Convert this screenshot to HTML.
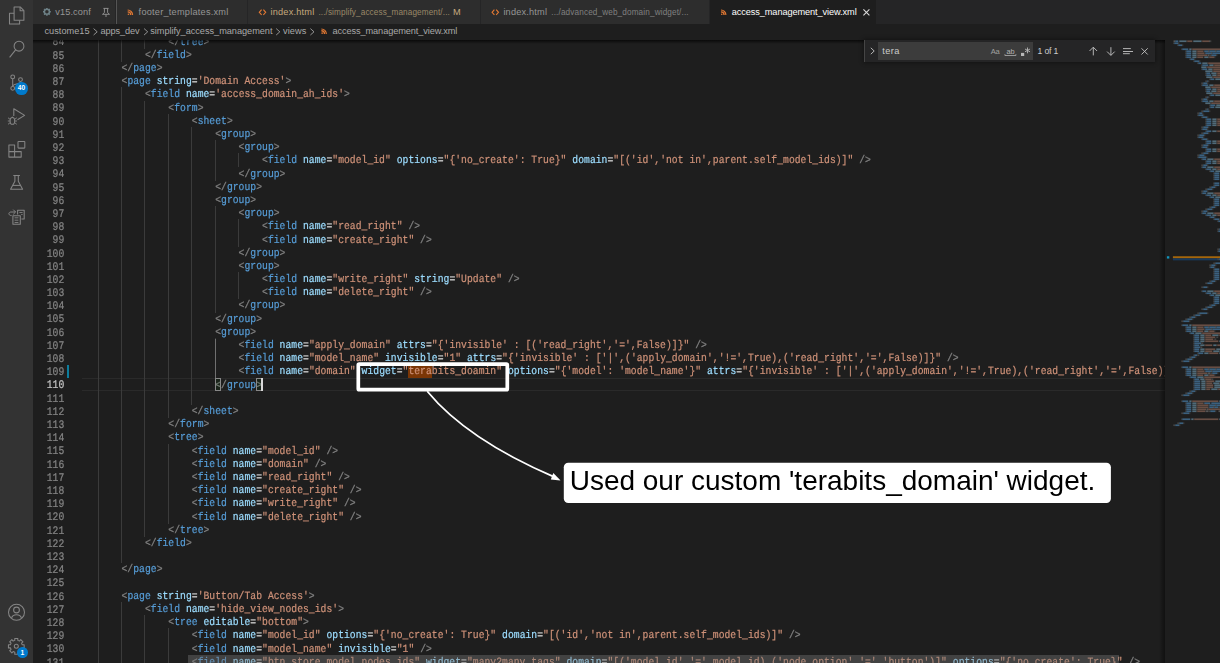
<!DOCTYPE html>
<html>
<head>
<meta charset="utf-8">
<title>access_management_view.xml</title>
<style>
html,body{margin:0;padding:0;}
body{width:1220px;height:663px;overflow:hidden;background:#1e1e1e;position:relative;font-family:"Liberation Sans",sans-serif;}
#act{position:absolute;left:0;top:0;width:33px;height:663px;background:#333333;}
#act svg{position:absolute;}
#tabs{position:absolute;left:33px;top:0;width:1187px;height:24px;background:#252526;}
.tab{position:absolute;top:0;height:24px;background:#2d2d2d;box-sizing:border-box;border-right:1px solid #252526;}
.tab.active{background:#1e1e1e;}
.tt{position:absolute;top:0;height:24px;line-height:24px;font-size:9.1px;color:#969696;white-space:nowrap;}
.tt.desc{font-size:7.9px;color:#7d7d7d;}
#bc{position:absolute;left:33px;top:24px;width:1187px;height:15.5px;background:#1e1e1e;}
.bt{position:absolute;top:0;height:15.5px;line-height:15.5px;font-size:9.1px;color:#a0a0a0;white-space:nowrap;}
#shadow{position:absolute;left:33px;top:39.5px;width:1132px;height:4px;background:linear-gradient(#000000aa,#00000000);}
#ed{position:absolute;left:33px;top:39.5px;width:1132px;height:623.5px;overflow:hidden;}
#edin{position:absolute;left:-33px;top:-39.5px;width:1220px;height:663px;}
.ln{position:absolute;left:33.5px;width:30.8px;text-align:right;height:13px;line-height:13px;font-family:"Liberation Mono",monospace;font-size:9.72px;letter-spacing:0.0211px;color:#858585;transform:scaleY(1.2);transform-origin:0 9px;text-rendering:geometricPrecision;-webkit-text-stroke:0.2px;}
.ln.cur{color:#c6c6c6;}
.cl{position:absolute;height:13px;line-height:13px;font-family:"Liberation Mono",monospace;font-size:9.72px;letter-spacing:0.0211px;color:#d4d4d4;white-space:pre;transform:scaleY(1.15);transform-origin:0 9px;text-rendering:geometricPrecision;-webkit-text-stroke:0.2px;}
.cl i{font-style:normal;}
.b{color:#808080;}
.t{color:#569cd6;}
.a{color:#9cdcfe;}
.e{color:#d4d4d4;}
.s{color:#ce9178;}
.g{position:absolute;width:1px;height:14px;background:#3b3b3b;}
.abs{position:absolute;}
.u{position:absolute;white-space:nowrap;line-height:normal;}
#find{position:absolute;left:864px;top:39.5px;width:291px;height:22.5px;background:#252526;box-sizing:border-box;border-left:1px solid #454545;box-shadow:0 0 4px 1px rgba(0,0,0,0.36);}
#finp{position:absolute;left:878px;top:42px;width:155px;height:17.7px;background:#3c3c3c;}
.ft{position:absolute;font-size:9.1px;color:#cccccc;white-space:nowrap;line-height:12px;}
#mini{position:absolute;left:1165px;top:39.5px;width:55px;height:623.5px;background:#1e1e1e;overflow:hidden;}
</style>
</head>
<body>

<!-- editor -->
<div id="ed"><div id="edin">
<!-- current line borders -->
<div class="abs" style="left:82px;top:378px;width:1083px;height:1px;background:#2a2a2a"></div>
<div class="abs" style="left:82px;top:390px;width:1083px;height:1px;background:#2a2a2a"></div>
<!-- find match -->
<div class="abs" style="left:408px;top:365px;width:24px;height:13px;background:#7b3606"></div>
<!-- modified gutter -->
<div class="abs" style="left:67.4px;top:365.2px;width:2px;height:13px;background:#0c7d9d"></div>
<div class="g" style="left:98px;top:35px"></div>
<div class="g" style="left:121px;top:35px"></div>
<div class="g" style="left:144px;top:35px"></div>
<div class="ln" style="top:36.00px">84</div>
<div class="cl" style="left:168.36px;top:36.00px"><i class="b">&lt;/</i><i class="t">tree</i><i class="b">&gt;</i></div>
<div class="g" style="left:98px;top:48px"></div>
<div class="g" style="left:121px;top:48px"></div>
<div class="ln" style="top:50.00px">85</div>
<div class="cl" style="left:144.95px;top:49.00px"><i class="b">&lt;/</i><i class="t">field</i><i class="b">&gt;</i></div>
<div class="g" style="left:98px;top:61px"></div>
<div class="ln" style="top:63.00px">86</div>
<div class="cl" style="left:121.53px;top:62.00px"><i class="b">&lt;/</i><i class="t">page</i><i class="b">&gt;</i></div>
<div class="g" style="left:98px;top:74px"></div>
<div class="ln" style="top:76.00px">87</div>
<div class="cl" style="left:121.53px;top:75.00px"><i class="b">&lt;</i><i class="t">page</i> <i class="a">string</i><i class="e">=</i><i class="s">'Domain Access'</i><i class="b">&gt;</i></div>
<div class="g" style="left:98px;top:87px"></div>
<div class="g" style="left:121px;top:87px"></div>
<div class="ln" style="top:89.00px">88</div>
<div class="cl" style="left:144.95px;top:88.00px"><i class="b">&lt;</i><i class="t">field</i> <i class="a">name</i><i class="e">=</i><i class="s">'access_domain_ah_ids'</i><i class="b">&gt;</i></div>
<div class="g" style="left:98px;top:101px"></div>
<div class="g" style="left:121px;top:101px"></div>
<div class="g" style="left:144px;top:101px"></div>
<div class="ln" style="top:102.00px">89</div>
<div class="cl" style="left:168.36px;top:102.00px"><i class="b">&lt;</i><i class="t">form</i><i class="b">&gt;</i></div>
<div class="g" style="left:98px;top:114px"></div>
<div class="g" style="left:121px;top:114px"></div>
<div class="g" style="left:144px;top:114px"></div>
<div class="g" style="left:168px;top:114px"></div>
<div class="ln" style="top:116.00px">90</div>
<div class="cl" style="left:191.78px;top:115.00px"><i class="b">&lt;</i><i class="t">sheet</i><i class="b">&gt;</i></div>
<div class="g" style="left:98px;top:127px"></div>
<div class="g" style="left:121px;top:127px"></div>
<div class="g" style="left:144px;top:127px"></div>
<div class="g" style="left:168px;top:127px"></div>
<div class="g" style="left:191px;top:127px"></div>
<div class="ln" style="top:129.00px">91</div>
<div class="cl" style="left:215.20px;top:128.00px"><i class="b">&lt;</i><i class="t">group</i><i class="b">&gt;</i></div>
<div class="g" style="left:98px;top:140px"></div>
<div class="g" style="left:121px;top:140px"></div>
<div class="g" style="left:144px;top:140px"></div>
<div class="g" style="left:168px;top:140px"></div>
<div class="g" style="left:191px;top:140px"></div>
<div class="g" style="left:215px;top:140px"></div>
<div class="ln" style="top:142.00px">92</div>
<div class="cl" style="left:238.61px;top:141.00px"><i class="b">&lt;</i><i class="t">group</i><i class="b">&gt;</i></div>
<div class="g" style="left:98px;top:153px"></div>
<div class="g" style="left:121px;top:153px"></div>
<div class="g" style="left:144px;top:153px"></div>
<div class="g" style="left:168px;top:153px"></div>
<div class="g" style="left:191px;top:153px"></div>
<div class="g" style="left:215px;top:153px"></div>
<div class="g" style="left:238px;top:153px"></div>
<div class="ln" style="top:155.00px">93</div>
<div class="cl" style="left:262.03px;top:154.00px"><i class="b">&lt;</i><i class="t">field</i> <i class="a">name</i><i class="e">=</i><i class="s">"model_id"</i> <i class="a">options</i><i class="e">=</i><i class="s">"{'no_create': True}"</i> <i class="a">domain</i><i class="e">=</i><i class="s">"[('id','not in',parent.self_model_ids)]"</i> <i class="b">/&gt;</i></div>
<div class="g" style="left:98px;top:167px"></div>
<div class="g" style="left:121px;top:167px"></div>
<div class="g" style="left:144px;top:167px"></div>
<div class="g" style="left:168px;top:167px"></div>
<div class="g" style="left:191px;top:167px"></div>
<div class="g" style="left:215px;top:167px"></div>
<div class="ln" style="top:168.00px">94</div>
<div class="cl" style="left:238.61px;top:168.00px"><i class="b">&lt;/</i><i class="t">group</i><i class="b">&gt;</i></div>
<div class="g" style="left:98px;top:180px"></div>
<div class="g" style="left:121px;top:180px"></div>
<div class="g" style="left:144px;top:180px"></div>
<div class="g" style="left:168px;top:180px"></div>
<div class="g" style="left:191px;top:180px"></div>
<div class="ln" style="top:182.00px">95</div>
<div class="cl" style="left:215.20px;top:181.00px"><i class="b">&lt;/</i><i class="t">group</i><i class="b">&gt;</i></div>
<div class="g" style="left:98px;top:193px"></div>
<div class="g" style="left:121px;top:193px"></div>
<div class="g" style="left:144px;top:193px"></div>
<div class="g" style="left:168px;top:193px"></div>
<div class="g" style="left:191px;top:193px"></div>
<div class="ln" style="top:195.00px">96</div>
<div class="cl" style="left:215.20px;top:194.00px"><i class="b">&lt;</i><i class="t">group</i><i class="b">&gt;</i></div>
<div class="g" style="left:98px;top:206px"></div>
<div class="g" style="left:121px;top:206px"></div>
<div class="g" style="left:144px;top:206px"></div>
<div class="g" style="left:168px;top:206px"></div>
<div class="g" style="left:191px;top:206px"></div>
<div class="g" style="left:215px;top:206px"></div>
<div class="ln" style="top:208.00px">97</div>
<div class="cl" style="left:238.61px;top:207.00px"><i class="b">&lt;</i><i class="t">group</i><i class="b">&gt;</i></div>
<div class="g" style="left:98px;top:219px"></div>
<div class="g" style="left:121px;top:219px"></div>
<div class="g" style="left:144px;top:219px"></div>
<div class="g" style="left:168px;top:219px"></div>
<div class="g" style="left:191px;top:219px"></div>
<div class="g" style="left:215px;top:219px"></div>
<div class="g" style="left:238px;top:219px"></div>
<div class="ln" style="top:221.00px">98</div>
<div class="cl" style="left:262.03px;top:220.00px"><i class="b">&lt;</i><i class="t">field</i> <i class="a">name</i><i class="e">=</i><i class="s">"read_right"</i> <i class="b">/&gt;</i></div>
<div class="g" style="left:98px;top:233px"></div>
<div class="g" style="left:121px;top:233px"></div>
<div class="g" style="left:144px;top:233px"></div>
<div class="g" style="left:168px;top:233px"></div>
<div class="g" style="left:191px;top:233px"></div>
<div class="g" style="left:215px;top:233px"></div>
<div class="g" style="left:238px;top:233px"></div>
<div class="ln" style="top:234.00px">99</div>
<div class="cl" style="left:262.03px;top:234.00px"><i class="b">&lt;</i><i class="t">field</i> <i class="a">name</i><i class="e">=</i><i class="s">"create_right"</i> <i class="b">/&gt;</i></div>
<div class="g" style="left:98px;top:246px"></div>
<div class="g" style="left:121px;top:246px"></div>
<div class="g" style="left:144px;top:246px"></div>
<div class="g" style="left:168px;top:246px"></div>
<div class="g" style="left:191px;top:246px"></div>
<div class="g" style="left:215px;top:246px"></div>
<div class="ln" style="top:248.00px">100</div>
<div class="cl" style="left:238.61px;top:247.00px"><i class="b">&lt;/</i><i class="t">group</i><i class="b">&gt;</i></div>
<div class="g" style="left:98px;top:259px"></div>
<div class="g" style="left:121px;top:259px"></div>
<div class="g" style="left:144px;top:259px"></div>
<div class="g" style="left:168px;top:259px"></div>
<div class="g" style="left:191px;top:259px"></div>
<div class="g" style="left:215px;top:259px"></div>
<div class="ln" style="top:261.00px">101</div>
<div class="cl" style="left:238.61px;top:260.00px"><i class="b">&lt;</i><i class="t">group</i><i class="b">&gt;</i></div>
<div class="g" style="left:98px;top:272px"></div>
<div class="g" style="left:121px;top:272px"></div>
<div class="g" style="left:144px;top:272px"></div>
<div class="g" style="left:168px;top:272px"></div>
<div class="g" style="left:191px;top:272px"></div>
<div class="g" style="left:215px;top:272px"></div>
<div class="g" style="left:238px;top:272px"></div>
<div class="ln" style="top:274.00px">102</div>
<div class="cl" style="left:262.03px;top:273.00px"><i class="b">&lt;</i><i class="t">field</i> <i class="a">name</i><i class="e">=</i><i class="s">"write_right"</i> <i class="a">string</i><i class="e">=</i><i class="s">"Update"</i> <i class="b">/&gt;</i></div>
<div class="g" style="left:98px;top:285px"></div>
<div class="g" style="left:121px;top:285px"></div>
<div class="g" style="left:144px;top:285px"></div>
<div class="g" style="left:168px;top:285px"></div>
<div class="g" style="left:191px;top:285px"></div>
<div class="g" style="left:215px;top:285px"></div>
<div class="g" style="left:238px;top:285px"></div>
<div class="ln" style="top:287.00px">103</div>
<div class="cl" style="left:262.03px;top:286.00px"><i class="b">&lt;</i><i class="t">field</i> <i class="a">name</i><i class="e">=</i><i class="s">"delete_right"</i> <i class="b">/&gt;</i></div>
<div class="g" style="left:98px;top:299px"></div>
<div class="g" style="left:121px;top:299px"></div>
<div class="g" style="left:144px;top:299px"></div>
<div class="g" style="left:168px;top:299px"></div>
<div class="g" style="left:191px;top:299px"></div>
<div class="g" style="left:215px;top:299px"></div>
<div class="ln" style="top:300.00px">104</div>
<div class="cl" style="left:238.61px;top:299.00px"><i class="b">&lt;/</i><i class="t">group</i><i class="b">&gt;</i></div>
<div class="g" style="left:98px;top:312px"></div>
<div class="g" style="left:121px;top:312px"></div>
<div class="g" style="left:144px;top:312px"></div>
<div class="g" style="left:168px;top:312px"></div>
<div class="g" style="left:191px;top:312px"></div>
<div class="ln" style="top:313.00px">105</div>
<div class="cl" style="left:215.20px;top:313.00px"><i class="b">&lt;/</i><i class="t">group</i><i class="b">&gt;</i></div>
<div class="g" style="left:98px;top:325px"></div>
<div class="g" style="left:121px;top:325px"></div>
<div class="g" style="left:144px;top:325px"></div>
<div class="g" style="left:168px;top:325px"></div>
<div class="g" style="left:191px;top:325px"></div>
<div class="ln" style="top:327.00px">106</div>
<div class="cl" style="left:215.20px;top:326.00px"><i class="b">&lt;</i><i class="t">group</i><i class="b">&gt;</i></div>
<div class="g" style="left:98px;top:338px"></div>
<div class="g" style="left:121px;top:338px"></div>
<div class="g" style="left:144px;top:338px"></div>
<div class="g" style="left:168px;top:338px"></div>
<div class="g" style="left:191px;top:338px"></div>
<div class="g" style="left:215px;top:338px"></div>
<div class="ln" style="top:340.00px">107</div>
<div class="cl" style="left:238.61px;top:339.00px"><i class="b">&lt;</i><i class="t">field</i> <i class="a">name</i><i class="e">=</i><i class="s">"apply_domain"</i> <i class="a">attrs</i><i class="e">=</i><i class="s">"{'invisible' : [('read_right','=',False)]}"</i> <i class="b">/&gt;</i></div>
<div class="g" style="left:98px;top:351px"></div>
<div class="g" style="left:121px;top:351px"></div>
<div class="g" style="left:144px;top:351px"></div>
<div class="g" style="left:168px;top:351px"></div>
<div class="g" style="left:191px;top:351px"></div>
<div class="g" style="left:215px;top:351px"></div>
<div class="ln" style="top:353.00px">108</div>
<div class="cl" style="left:238.61px;top:352.00px"><i class="b">&lt;</i><i class="t">field</i> <i class="a">name</i><i class="e">=</i><i class="s">"model_name"</i> <i class="a">invisible</i><i class="e">=</i><i class="s">"1"</i> <i class="a">attrs</i><i class="e">=</i><i class="s">"{'invisible' : ['|',('apply_domain','!=',True),('read_right','=',False)]}"</i> <i class="b">/&gt;</i></div>
<div class="g" style="left:98px;top:365px"></div>
<div class="g" style="left:121px;top:365px"></div>
<div class="g" style="left:144px;top:365px"></div>
<div class="g" style="left:168px;top:365px"></div>
<div class="g" style="left:191px;top:365px"></div>
<div class="g" style="left:215px;top:365px"></div>
<div class="ln" style="top:366.00px">109</div>
<div class="cl" style="left:238.61px;top:365.00px"><i class="b">&lt;</i><i class="t">field</i> <i class="a">name</i><i class="e">=</i><i class="s">"domain"</i> <i class="a">widget</i><i class="e">=</i><i class="s">"terabits_doamin"</i> <i class="a">options</i><i class="e">=</i><i class="s">"{'model': 'model_name'}"</i> <i class="a">attrs</i><i class="e">=</i><i class="s">"{'invisible' : ['|',('apply_domain','!=',True),('read_right','=',False)]}"</i> <i class="b">/&gt;</i></div>
<div class="g" style="left:98px;top:378px"></div>
<div class="g" style="left:121px;top:378px"></div>
<div class="g" style="left:144px;top:378px"></div>
<div class="g" style="left:168px;top:378px"></div>
<div class="g" style="left:191px;top:378px"></div>
<div class="ln cur" style="top:379.00px">110</div>
<div class="cl" style="left:215.20px;top:379.00px"><i class="b">&lt;/</i><i class="t">group</i><i class="b">&gt;</i></div>
<div class="g" style="left:98px;top:391px"></div>
<div class="g" style="left:121px;top:391px"></div>
<div class="g" style="left:144px;top:391px"></div>
<div class="g" style="left:168px;top:391px"></div>
<div class="g" style="left:191px;top:391px"></div>
<div class="ln" style="top:393.00px">111</div>
<div class="g" style="left:98px;top:404px"></div>
<div class="g" style="left:121px;top:404px"></div>
<div class="g" style="left:144px;top:404px"></div>
<div class="g" style="left:168px;top:404px"></div>
<div class="ln" style="top:406.00px">112</div>
<div class="cl" style="left:191.78px;top:405.00px"><i class="b">&lt;/</i><i class="t">sheet</i><i class="b">&gt;</i></div>
<div class="g" style="left:98px;top:417px"></div>
<div class="g" style="left:121px;top:417px"></div>
<div class="g" style="left:144px;top:417px"></div>
<div class="ln" style="top:419.00px">113</div>
<div class="cl" style="left:168.36px;top:418.00px"><i class="b">&lt;/</i><i class="t">form</i><i class="b">&gt;</i></div>
<div class="g" style="left:98px;top:431px"></div>
<div class="g" style="left:121px;top:431px"></div>
<div class="g" style="left:144px;top:431px"></div>
<div class="ln" style="top:432.00px">114</div>
<div class="cl" style="left:168.36px;top:431.00px"><i class="b">&lt;</i><i class="t">tree</i><i class="b">&gt;</i></div>
<div class="g" style="left:98px;top:444px"></div>
<div class="g" style="left:121px;top:444px"></div>
<div class="g" style="left:144px;top:444px"></div>
<div class="g" style="left:168px;top:444px"></div>
<div class="ln" style="top:445.00px">115</div>
<div class="cl" style="left:191.78px;top:445.00px"><i class="b">&lt;</i><i class="t">field</i> <i class="a">name</i><i class="e">=</i><i class="s">"model_id"</i> <i class="b">/&gt;</i></div>
<div class="g" style="left:98px;top:457px"></div>
<div class="g" style="left:121px;top:457px"></div>
<div class="g" style="left:144px;top:457px"></div>
<div class="g" style="left:168px;top:457px"></div>
<div class="ln" style="top:459.00px">116</div>
<div class="cl" style="left:191.78px;top:458.00px"><i class="b">&lt;</i><i class="t">field</i> <i class="a">name</i><i class="e">=</i><i class="s">"domain"</i> <i class="b">/&gt;</i></div>
<div class="g" style="left:98px;top:470px"></div>
<div class="g" style="left:121px;top:470px"></div>
<div class="g" style="left:144px;top:470px"></div>
<div class="g" style="left:168px;top:470px"></div>
<div class="ln" style="top:472.00px">117</div>
<div class="cl" style="left:191.78px;top:471.00px"><i class="b">&lt;</i><i class="t">field</i> <i class="a">name</i><i class="e">=</i><i class="s">"read_right"</i> <i class="b">/&gt;</i></div>
<div class="g" style="left:98px;top:483px"></div>
<div class="g" style="left:121px;top:483px"></div>
<div class="g" style="left:144px;top:483px"></div>
<div class="g" style="left:168px;top:483px"></div>
<div class="ln" style="top:485.00px">118</div>
<div class="cl" style="left:191.78px;top:484.00px"><i class="b">&lt;</i><i class="t">field</i> <i class="a">name</i><i class="e">=</i><i class="s">"create_right"</i> <i class="b">/&gt;</i></div>
<div class="g" style="left:98px;top:496px"></div>
<div class="g" style="left:121px;top:496px"></div>
<div class="g" style="left:144px;top:496px"></div>
<div class="g" style="left:168px;top:496px"></div>
<div class="ln" style="top:498.00px">119</div>
<div class="cl" style="left:191.78px;top:497.00px"><i class="b">&lt;</i><i class="t">field</i> <i class="a">name</i><i class="e">=</i><i class="s">"write_right"</i> <i class="b">/&gt;</i></div>
<div class="g" style="left:98px;top:510px"></div>
<div class="g" style="left:121px;top:510px"></div>
<div class="g" style="left:144px;top:510px"></div>
<div class="g" style="left:168px;top:510px"></div>
<div class="ln" style="top:511.00px">120</div>
<div class="cl" style="left:191.78px;top:511.00px"><i class="b">&lt;</i><i class="t">field</i> <i class="a">name</i><i class="e">=</i><i class="s">"delete_right"</i> <i class="b">/&gt;</i></div>
<div class="g" style="left:98px;top:523px"></div>
<div class="g" style="left:121px;top:523px"></div>
<div class="g" style="left:144px;top:523px"></div>
<div class="ln" style="top:525.00px">121</div>
<div class="cl" style="left:168.36px;top:524.00px"><i class="b">&lt;/</i><i class="t">tree</i><i class="b">&gt;</i></div>
<div class="g" style="left:98px;top:536px"></div>
<div class="g" style="left:121px;top:536px"></div>
<div class="ln" style="top:538.00px">122</div>
<div class="cl" style="left:144.95px;top:537.00px"><i class="b">&lt;/</i><i class="t">field</i><i class="b">&gt;</i></div>
<div class="g" style="left:98px;top:549px"></div>
<div class="g" style="left:121px;top:549px"></div>
<div class="ln" style="top:551.00px">123</div>
<div class="g" style="left:98px;top:562px"></div>
<div class="ln" style="top:564.00px">124</div>
<div class="cl" style="left:121.53px;top:563.00px"><i class="b">&lt;/</i><i class="t">page</i><i class="b">&gt;</i></div>
<div class="g" style="left:98px;top:576px"></div>
<div class="ln" style="top:577.00px">125</div>
<div class="g" style="left:98px;top:589px"></div>
<div class="ln" style="top:591.00px">126</div>
<div class="cl" style="left:121.53px;top:590.00px"><i class="b">&lt;</i><i class="t">page</i> <i class="a">string</i><i class="e">=</i><i class="s">'Button/Tab Access'</i><i class="b">&gt;</i></div>
<div class="g" style="left:98px;top:602px"></div>
<div class="g" style="left:121px;top:602px"></div>
<div class="ln" style="top:604.00px">127</div>
<div class="cl" style="left:144.95px;top:603.00px"><i class="b">&lt;</i><i class="t">field</i> <i class="a">name</i><i class="e">=</i><i class="s">'hide_view_nodes_ids'</i><i class="b">&gt;</i></div>
<div class="g" style="left:98px;top:615px"></div>
<div class="g" style="left:121px;top:615px"></div>
<div class="g" style="left:144px;top:615px"></div>
<div class="ln" style="top:617.00px">128</div>
<div class="cl" style="left:168.36px;top:616.00px"><i class="b">&lt;</i><i class="t">tree</i> <i class="a">editable</i><i class="e">=</i><i class="s">"bottom"</i><i class="b">&gt;</i></div>
<div class="g" style="left:98px;top:628px"></div>
<div class="g" style="left:121px;top:628px"></div>
<div class="g" style="left:144px;top:628px"></div>
<div class="g" style="left:168px;top:628px"></div>
<div class="ln" style="top:630.00px">129</div>
<div class="cl" style="left:191.78px;top:629.00px"><i class="b">&lt;</i><i class="t">field</i> <i class="a">name</i><i class="e">=</i><i class="s">"model_id"</i> <i class="a">options</i><i class="e">=</i><i class="s">"{'no_create': True}"</i> <i class="a">domain</i><i class="e">=</i><i class="s">"[('id','not in',parent.self_model_ids)]"</i> <i class="b">/&gt;</i></div>
<div class="g" style="left:98px;top:642px"></div>
<div class="g" style="left:121px;top:642px"></div>
<div class="g" style="left:144px;top:642px"></div>
<div class="g" style="left:168px;top:642px"></div>
<div class="ln" style="top:643.00px">130</div>
<div class="cl" style="left:191.78px;top:643.00px"><i class="b">&lt;</i><i class="t">field</i> <i class="a">name</i><i class="e">=</i><i class="s">"model_name"</i> <i class="a">invisible</i><i class="e">=</i><i class="s">"1"</i> <i class="b">/&gt;</i></div>
<div class="g" style="left:98px;top:655px"></div>
<div class="g" style="left:121px;top:655px"></div>
<div class="g" style="left:144px;top:655px"></div>
<div class="g" style="left:168px;top:655px"></div>
<div class="ln" style="top:657.00px">131</div>
<div class="cl" style="left:191.78px;top:656.00px"><i class="b">&lt;</i><i class="t">field</i> <i class="a">name</i><i class="e">=</i><i class="s">"btn_store_model_nodes_ids"</i> <i class="a">widget</i><i class="e">=</i><i class="s">"many2many_tags"</i> <i class="a">domain</i><i class="e">=</i><i class="s">"[('model_id','=',model_id),('node_option','=','button')]"</i> <i class="a">options</i><i class="e">=</i><i class="s">"{'no_create': True}"</i> <i class="b">/&gt;</i></div>
<!-- bracket match -->
<div class="abs" style="left:215px;top:339px;width:1px;height:39.5px;background:#707070"></div>
<div class="abs" style="left:215px;top:378.3px;width:6px;height:12.6px;border:1px solid #888;background:rgba(0,100,0,0.1);box-sizing:border-box"></div>
<div class="abs" style="left:255.9px;top:378.3px;width:6px;height:12.6px;border:1px solid #888;background:rgba(0,100,0,0.1);box-sizing:border-box"></div>
<div class="abs" style="left:261.4px;top:378.3px;width:1.5px;height:12.6px;background:#d8d8d8"></div>
<!-- horizontal scrollbar -->
<div class="abs" style="left:188px;top:654.7px;width:931px;height:9px;background:rgba(121,121,121,0.4)"></div>
</div></div>
<div id="shadow"></div>
<div class="abs" style="left:1159px;top:39.5px;width:6px;height:623.5px;background:linear-gradient(to right,rgba(0,0,0,0),rgba(0,0,0,0.45))"></div>

<!-- minimap -->
<div id="mini"><svg class="abs" style="left:0;top:0;filter:blur(0.35px)" width="55" height="623.5" viewBox="0 0 55 623.5">
<rect x="7.9" y="216.25" width="55.0" height="2.1" fill="#a4660b"/>
<rect x="7.9" y="218.35" width="55.0" height="2.0" fill="#17395c"/>
<rect x="1.9" y="216.25" width="2.4" height="2.3" fill="#1295bd"/>
<rect x="8.3" y="0.40" width="1.0" height="1.7" fill="#434343"/>
<rect x="9.3" y="0.40" width="1.0" height="1.7" fill="#676767"/>
<rect x="10.3" y="0.40" width="3.0" height="1.7" fill="#3b607e"/>
<rect x="14.3" y="0.40" width="7.0" height="1.7" fill="#506a78"/>
<rect x="21.3" y="0.40" width="1.0" height="1.7" fill="#515151"/>
<rect x="22.3" y="0.40" width="5.0" height="1.7" fill="#684e44"/>
<rect x="28.3" y="0.40" width="8.0" height="1.7" fill="#506a78"/>
<rect x="36.3" y="0.40" width="1.0" height="1.7" fill="#515151"/>
<rect x="37.3" y="0.40" width="7.0" height="1.7" fill="#684e44"/>
<rect x="44.3" y="0.40" width="1.0" height="1.7" fill="#676767"/>
<rect x="45.3" y="0.40" width="1.0" height="1.7" fill="#434343"/>
<rect x="8.3" y="2.40" width="1.0" height="1.7" fill="#434343"/>
<rect x="9.3" y="2.40" width="4.0" height="1.7" fill="#3b607e"/>
<rect x="13.3" y="2.40" width="1.0" height="1.7" fill="#434343"/>
<rect x="12.3" y="4.40" width="1.0" height="1.7" fill="#434343"/>
<rect x="13.3" y="4.40" width="4.0" height="1.7" fill="#3b607e"/>
<rect x="17.3" y="4.40" width="1.0" height="1.7" fill="#434343"/>
<rect x="16.3" y="8.40" width="1.0" height="1.7" fill="#434343"/>
<rect x="17.3" y="8.40" width="6.0" height="1.7" fill="#3b607e"/>
<rect x="24.3" y="8.40" width="2.0" height="1.7" fill="#506a78"/>
<rect x="26.3" y="8.40" width="1.0" height="1.7" fill="#515151"/>
<rect x="27.3" y="8.40" width="27.7" height="1.7" fill="#684e44"/>
<rect x="20.3" y="10.40" width="1.0" height="1.7" fill="#434343"/>
<rect x="21.3" y="10.40" width="5.0" height="1.7" fill="#3b607e"/>
<rect x="27.3" y="10.40" width="4.0" height="1.7" fill="#506a78"/>
<rect x="31.3" y="10.40" width="1.0" height="1.7" fill="#515151"/>
<rect x="32.3" y="10.40" width="6.0" height="1.7" fill="#684e44"/>
<rect x="38.3" y="10.40" width="1.0" height="1.7" fill="#434343"/>
<rect x="39.3" y="10.40" width="4.0" height="1.7" fill="#3b607e"/>
<rect x="43.3" y="10.40" width="1.0" height="1.7" fill="#676767"/>
<rect x="44.3" y="10.40" width="6.0" height="1.7" fill="#3b607e"/>
<rect x="50.3" y="10.40" width="1.0" height="1.7" fill="#676767"/>
<rect x="51.3" y="10.40" width="3.7" height="1.7" fill="#3b607e"/>
<rect x="20.3" y="12.40" width="1.0" height="1.7" fill="#434343"/>
<rect x="21.3" y="12.40" width="5.0" height="1.7" fill="#3b607e"/>
<rect x="27.3" y="12.40" width="4.0" height="1.7" fill="#506a78"/>
<rect x="31.3" y="12.40" width="1.0" height="1.7" fill="#515151"/>
<rect x="32.3" y="12.40" width="7.0" height="1.7" fill="#684e44"/>
<rect x="39.3" y="12.40" width="1.0" height="1.7" fill="#434343"/>
<rect x="40.3" y="12.40" width="6.0" height="1.7" fill="#3b607e"/>
<rect x="46.3" y="12.40" width="1.0" height="1.7" fill="#676767"/>
<rect x="47.3" y="12.40" width="7.7" height="1.7" fill="#3b607e"/>
<rect x="20.3" y="14.40" width="1.0" height="1.7" fill="#434343"/>
<rect x="21.3" y="14.40" width="5.0" height="1.7" fill="#3b607e"/>
<rect x="27.3" y="14.40" width="4.0" height="1.7" fill="#506a78"/>
<rect x="31.3" y="14.40" width="1.0" height="1.7" fill="#515151"/>
<rect x="32.3" y="14.40" width="10.0" height="1.7" fill="#684e44"/>
<rect x="42.3" y="14.40" width="1.0" height="1.7" fill="#434343"/>
<rect x="43.3" y="14.40" width="1.0" height="1.7" fill="#676767"/>
<rect x="44.3" y="14.40" width="2.0" height="1.7" fill="#434343"/>
<rect x="46.3" y="14.40" width="5.0" height="1.7" fill="#3b607e"/>
<rect x="51.3" y="14.40" width="1.0" height="1.7" fill="#434343"/>
<rect x="20.3" y="16.40" width="1.0" height="1.7" fill="#434343"/>
<rect x="21.3" y="16.40" width="5.0" height="1.7" fill="#3b607e"/>
<rect x="27.3" y="16.40" width="4.0" height="1.7" fill="#506a78"/>
<rect x="31.3" y="16.40" width="1.0" height="1.7" fill="#515151"/>
<rect x="32.3" y="16.40" width="6.0" height="1.7" fill="#684e44"/>
<rect x="39.3" y="16.40" width="4.0" height="1.7" fill="#506a78"/>
<rect x="43.3" y="16.40" width="1.0" height="1.7" fill="#515151"/>
<rect x="44.3" y="16.40" width="5.0" height="1.7" fill="#684e44"/>
<rect x="49.3" y="16.40" width="1.0" height="1.7" fill="#434343"/>
<rect x="24.3" y="18.40" width="1.0" height="1.7" fill="#434343"/>
<rect x="25.3" y="18.40" width="4.0" height="1.7" fill="#3b607e"/>
<rect x="29.3" y="18.40" width="1.0" height="1.7" fill="#434343"/>
<rect x="28.3" y="20.40" width="1.0" height="1.7" fill="#434343"/>
<rect x="29.3" y="20.40" width="5.0" height="1.7" fill="#3b607e"/>
<rect x="34.3" y="20.40" width="1.0" height="1.7" fill="#434343"/>
<rect x="32.3" y="22.40" width="1.0" height="1.7" fill="#434343"/>
<rect x="33.3" y="22.40" width="3.0" height="1.7" fill="#3b607e"/>
<rect x="37.3" y="22.40" width="5.0" height="1.7" fill="#506a78"/>
<rect x="42.3" y="22.40" width="1.0" height="1.7" fill="#515151"/>
<rect x="43.3" y="22.40" width="11.7" height="1.7" fill="#684e44"/>
<rect x="36.3" y="24.40" width="1.0" height="1.7" fill="#434343"/>
<rect x="37.3" y="24.40" width="6.0" height="1.7" fill="#3b607e"/>
<rect x="44.3" y="24.40" width="4.0" height="1.7" fill="#506a78"/>
<rect x="48.3" y="24.40" width="1.0" height="1.7" fill="#515151"/>
<rect x="49.3" y="24.40" width="5.7" height="1.7" fill="#684e44"/>
<rect x="36.3" y="26.40" width="5.0" height="1.7" fill="#506a78"/>
<rect x="41.3" y="26.40" width="1.0" height="1.7" fill="#515151"/>
<rect x="42.3" y="26.40" width="12.7" height="1.7" fill="#684e44"/>
<rect x="36.3" y="28.40" width="1.0" height="1.7" fill="#434343"/>
<rect x="37.3" y="28.40" width="5.0" height="1.7" fill="#3b607e"/>
<rect x="43.3" y="28.40" width="4.0" height="1.7" fill="#506a78"/>
<rect x="47.3" y="28.40" width="1.0" height="1.7" fill="#515151"/>
<rect x="48.3" y="28.40" width="6.7" height="1.7" fill="#684e44"/>
<rect x="40.3" y="30.40" width="7.0" height="1.7" fill="#506a78"/>
<rect x="47.3" y="30.40" width="1.0" height="1.7" fill="#515151"/>
<rect x="48.3" y="30.40" width="6.7" height="1.7" fill="#684e44"/>
<rect x="40.3" y="32.40" width="1.0" height="1.7" fill="#434343"/>
<rect x="41.3" y="32.40" width="4.0" height="1.7" fill="#3b607e"/>
<rect x="46.3" y="32.40" width="5.0" height="1.7" fill="#506a78"/>
<rect x="51.3" y="32.40" width="1.0" height="1.7" fill="#515151"/>
<rect x="52.3" y="32.40" width="2.7" height="1.7" fill="#684e44"/>
<rect x="40.3" y="34.40" width="1.0" height="1.7" fill="#434343"/>
<rect x="41.3" y="34.40" width="5.0" height="1.7" fill="#3b607e"/>
<rect x="47.3" y="34.40" width="4.0" height="1.7" fill="#506a78"/>
<rect x="51.3" y="34.40" width="1.0" height="1.7" fill="#515151"/>
<rect x="52.3" y="34.40" width="2.7" height="1.7" fill="#684e44"/>
<rect x="41.3" y="36.40" width="6.0" height="1.7" fill="#506a78"/>
<rect x="47.3" y="36.40" width="1.0" height="1.7" fill="#515151"/>
<rect x="48.3" y="36.40" width="6.7" height="1.7" fill="#684e44"/>
<rect x="44.3" y="38.40" width="1.0" height="1.7" fill="#434343"/>
<rect x="45.3" y="38.40" width="4.0" height="1.7" fill="#3b607e"/>
<rect x="50.3" y="38.40" width="4.7" height="1.7" fill="#506a78"/>
<rect x="40.3" y="40.40" width="2.0" height="1.7" fill="#434343"/>
<rect x="42.3" y="40.40" width="1.0" height="1.7" fill="#3b607e"/>
<rect x="43.3" y="40.40" width="1.0" height="1.7" fill="#434343"/>
<rect x="36.3" y="42.40" width="2.0" height="1.7" fill="#434343"/>
<rect x="38.3" y="42.40" width="4.0" height="1.7" fill="#3b607e"/>
<rect x="42.3" y="42.40" width="1.0" height="1.7" fill="#434343"/>
<rect x="36.3" y="44.40" width="1.0" height="1.7" fill="#434343"/>
<rect x="37.3" y="44.40" width="6.0" height="1.7" fill="#3b607e"/>
<rect x="44.3" y="44.40" width="4.0" height="1.7" fill="#506a78"/>
<rect x="48.3" y="44.40" width="1.0" height="1.7" fill="#515151"/>
<rect x="49.3" y="44.40" width="5.7" height="1.7" fill="#684e44"/>
<rect x="40.3" y="46.40" width="5.0" height="1.7" fill="#506a78"/>
<rect x="45.3" y="46.40" width="1.0" height="1.7" fill="#515151"/>
<rect x="46.3" y="46.40" width="8.7" height="1.7" fill="#684e44"/>
<rect x="40.3" y="48.40" width="1.0" height="1.7" fill="#434343"/>
<rect x="41.3" y="48.40" width="5.0" height="1.7" fill="#3b607e"/>
<rect x="47.3" y="48.40" width="4.0" height="1.7" fill="#506a78"/>
<rect x="51.3" y="48.40" width="1.0" height="1.7" fill="#515151"/>
<rect x="52.3" y="48.40" width="2.7" height="1.7" fill="#684e44"/>
<rect x="40.3" y="50.40" width="1.0" height="1.7" fill="#434343"/>
<rect x="41.3" y="50.40" width="4.0" height="1.7" fill="#3b607e"/>
<rect x="46.3" y="50.40" width="5.0" height="1.7" fill="#506a78"/>
<rect x="51.3" y="50.40" width="1.0" height="1.7" fill="#515151"/>
<rect x="52.3" y="50.40" width="2.7" height="1.7" fill="#684e44"/>
<rect x="41.3" y="52.40" width="6.0" height="1.7" fill="#506a78"/>
<rect x="47.3" y="52.40" width="1.0" height="1.7" fill="#515151"/>
<rect x="48.3" y="52.40" width="6.7" height="1.7" fill="#684e44"/>
<rect x="44.3" y="54.40" width="1.0" height="1.7" fill="#434343"/>
<rect x="45.3" y="54.40" width="4.0" height="1.7" fill="#3b607e"/>
<rect x="50.3" y="54.40" width="4.7" height="1.7" fill="#506a78"/>
<rect x="40.3" y="56.40" width="2.0" height="1.7" fill="#434343"/>
<rect x="42.3" y="56.40" width="1.0" height="1.7" fill="#3b607e"/>
<rect x="43.3" y="56.40" width="1.0" height="1.7" fill="#434343"/>
<rect x="36.3" y="58.40" width="2.0" height="1.7" fill="#434343"/>
<rect x="38.3" y="58.40" width="4.0" height="1.7" fill="#3b607e"/>
<rect x="42.3" y="58.40" width="1.0" height="1.7" fill="#434343"/>
<rect x="36.3" y="60.40" width="1.0" height="1.7" fill="#434343"/>
<rect x="37.3" y="60.40" width="6.0" height="1.7" fill="#3b607e"/>
<rect x="44.3" y="60.40" width="4.0" height="1.7" fill="#506a78"/>
<rect x="48.3" y="60.40" width="1.0" height="1.7" fill="#515151"/>
<rect x="49.3" y="60.40" width="5.7" height="1.7" fill="#684e44"/>
<rect x="40.3" y="62.40" width="5.0" height="1.7" fill="#506a78"/>
<rect x="45.3" y="62.40" width="1.0" height="1.7" fill="#515151"/>
<rect x="46.3" y="62.40" width="8.7" height="1.7" fill="#684e44"/>
<rect x="44.3" y="64.40" width="1.0" height="1.7" fill="#434343"/>
<rect x="45.3" y="64.40" width="5.0" height="1.7" fill="#3b607e"/>
<rect x="51.3" y="64.40" width="3.7" height="1.7" fill="#506a78"/>
<rect x="44.3" y="66.40" width="1.0" height="1.7" fill="#434343"/>
<rect x="45.3" y="66.40" width="4.0" height="1.7" fill="#3b607e"/>
<rect x="50.3" y="66.40" width="4.7" height="1.7" fill="#506a78"/>
<rect x="40.3" y="68.40" width="2.0" height="1.7" fill="#434343"/>
<rect x="42.3" y="68.40" width="1.0" height="1.7" fill="#3b607e"/>
<rect x="43.3" y="68.40" width="1.0" height="1.7" fill="#434343"/>
<rect x="36.3" y="70.40" width="2.0" height="1.7" fill="#434343"/>
<rect x="38.3" y="70.40" width="6.0" height="1.7" fill="#3b607e"/>
<rect x="44.3" y="70.40" width="1.0" height="1.7" fill="#434343"/>
<rect x="32.3" y="72.40" width="2.0" height="1.7" fill="#434343"/>
<rect x="34.3" y="72.40" width="3.0" height="1.7" fill="#3b607e"/>
<rect x="37.3" y="72.40" width="1.0" height="1.7" fill="#434343"/>
<rect x="32.3" y="74.40" width="1.0" height="1.7" fill="#434343"/>
<rect x="33.3" y="74.40" width="5.0" height="1.7" fill="#3b607e"/>
<rect x="38.3" y="74.40" width="1.0" height="1.7" fill="#434343"/>
<rect x="36.3" y="76.40" width="1.0" height="1.7" fill="#434343"/>
<rect x="37.3" y="76.40" width="5.0" height="1.7" fill="#3b607e"/>
<rect x="42.3" y="76.40" width="1.0" height="1.7" fill="#434343"/>
<rect x="40.3" y="78.40" width="1.0" height="1.7" fill="#434343"/>
<rect x="41.3" y="78.40" width="5.0" height="1.7" fill="#3b607e"/>
<rect x="47.3" y="78.40" width="4.0" height="1.7" fill="#506a78"/>
<rect x="51.3" y="78.40" width="1.0" height="1.7" fill="#515151"/>
<rect x="52.3" y="78.40" width="2.7" height="1.7" fill="#684e44"/>
<rect x="40.3" y="80.40" width="1.0" height="1.7" fill="#434343"/>
<rect x="41.3" y="80.40" width="5.0" height="1.7" fill="#3b607e"/>
<rect x="47.3" y="80.40" width="4.0" height="1.7" fill="#506a78"/>
<rect x="51.3" y="80.40" width="1.0" height="1.7" fill="#515151"/>
<rect x="52.3" y="80.40" width="2.7" height="1.7" fill="#684e44"/>
<rect x="40.3" y="82.40" width="1.0" height="1.7" fill="#434343"/>
<rect x="41.3" y="82.40" width="5.0" height="1.7" fill="#3b607e"/>
<rect x="47.3" y="82.40" width="4.0" height="1.7" fill="#506a78"/>
<rect x="51.3" y="82.40" width="1.0" height="1.7" fill="#515151"/>
<rect x="52.3" y="82.40" width="2.7" height="1.7" fill="#684e44"/>
<rect x="40.3" y="84.40" width="1.0" height="1.7" fill="#434343"/>
<rect x="41.3" y="84.40" width="5.0" height="1.7" fill="#3b607e"/>
<rect x="47.3" y="84.40" width="4.0" height="1.7" fill="#506a78"/>
<rect x="51.3" y="84.40" width="1.0" height="1.7" fill="#515151"/>
<rect x="52.3" y="84.40" width="2.7" height="1.7" fill="#684e44"/>
<rect x="36.3" y="86.40" width="2.0" height="1.7" fill="#434343"/>
<rect x="38.3" y="86.40" width="5.0" height="1.7" fill="#3b607e"/>
<rect x="43.3" y="86.40" width="1.0" height="1.7" fill="#434343"/>
<rect x="36.3" y="88.40" width="1.0" height="1.7" fill="#434343"/>
<rect x="37.3" y="88.40" width="5.0" height="1.7" fill="#3b607e"/>
<rect x="42.3" y="88.40" width="1.0" height="1.7" fill="#434343"/>
<rect x="40.3" y="90.40" width="1.0" height="1.7" fill="#434343"/>
<rect x="41.3" y="90.40" width="5.0" height="1.7" fill="#3b607e"/>
<rect x="47.3" y="90.40" width="4.0" height="1.7" fill="#506a78"/>
<rect x="51.3" y="90.40" width="1.0" height="1.7" fill="#515151"/>
<rect x="52.3" y="90.40" width="2.7" height="1.7" fill="#684e44"/>
<rect x="36.3" y="92.40" width="2.0" height="1.7" fill="#434343"/>
<rect x="38.3" y="92.40" width="5.0" height="1.7" fill="#3b607e"/>
<rect x="43.3" y="92.40" width="1.0" height="1.7" fill="#434343"/>
<rect x="32.3" y="94.40" width="2.0" height="1.7" fill="#434343"/>
<rect x="34.3" y="94.40" width="5.0" height="1.7" fill="#3b607e"/>
<rect x="39.3" y="94.40" width="1.0" height="1.7" fill="#434343"/>
<rect x="32.3" y="96.40" width="1.0" height="1.7" fill="#434343"/>
<rect x="33.3" y="96.40" width="5.0" height="1.7" fill="#3b607e"/>
<rect x="38.3" y="96.40" width="1.0" height="1.7" fill="#434343"/>
<rect x="36.3" y="98.40" width="1.0" height="1.7" fill="#434343"/>
<rect x="37.3" y="98.40" width="5.0" height="1.7" fill="#3b607e"/>
<rect x="42.3" y="98.40" width="1.0" height="1.7" fill="#434343"/>
<rect x="40.3" y="100.40" width="1.0" height="1.7" fill="#434343"/>
<rect x="41.3" y="100.40" width="5.0" height="1.7" fill="#3b607e"/>
<rect x="47.3" y="100.40" width="4.0" height="1.7" fill="#506a78"/>
<rect x="51.3" y="100.40" width="1.0" height="1.7" fill="#515151"/>
<rect x="52.3" y="100.40" width="2.7" height="1.7" fill="#684e44"/>
<rect x="40.3" y="102.40" width="1.0" height="1.7" fill="#434343"/>
<rect x="41.3" y="102.40" width="5.0" height="1.7" fill="#3b607e"/>
<rect x="47.3" y="102.40" width="4.0" height="1.7" fill="#506a78"/>
<rect x="51.3" y="102.40" width="1.0" height="1.7" fill="#515151"/>
<rect x="52.3" y="102.40" width="2.7" height="1.7" fill="#684e44"/>
<rect x="36.3" y="104.40" width="2.0" height="1.7" fill="#434343"/>
<rect x="38.3" y="104.40" width="5.0" height="1.7" fill="#3b607e"/>
<rect x="43.3" y="104.40" width="1.0" height="1.7" fill="#434343"/>
<rect x="36.3" y="106.40" width="1.0" height="1.7" fill="#434343"/>
<rect x="37.3" y="106.40" width="5.0" height="1.7" fill="#3b607e"/>
<rect x="42.3" y="106.40" width="1.0" height="1.7" fill="#434343"/>
<rect x="40.3" y="108.40" width="1.0" height="1.7" fill="#434343"/>
<rect x="41.3" y="108.40" width="5.0" height="1.7" fill="#3b607e"/>
<rect x="47.3" y="108.40" width="4.0" height="1.7" fill="#506a78"/>
<rect x="51.3" y="108.40" width="1.0" height="1.7" fill="#515151"/>
<rect x="52.3" y="108.40" width="2.7" height="1.7" fill="#684e44"/>
<rect x="40.3" y="110.40" width="1.0" height="1.7" fill="#434343"/>
<rect x="41.3" y="110.40" width="5.0" height="1.7" fill="#3b607e"/>
<rect x="47.3" y="110.40" width="4.0" height="1.7" fill="#506a78"/>
<rect x="51.3" y="110.40" width="1.0" height="1.7" fill="#515151"/>
<rect x="52.3" y="110.40" width="2.7" height="1.7" fill="#684e44"/>
<rect x="36.3" y="112.40" width="2.0" height="1.7" fill="#434343"/>
<rect x="38.3" y="112.40" width="5.0" height="1.7" fill="#3b607e"/>
<rect x="43.3" y="112.40" width="1.0" height="1.7" fill="#434343"/>
<rect x="32.3" y="114.40" width="2.0" height="1.7" fill="#434343"/>
<rect x="34.3" y="114.40" width="5.0" height="1.7" fill="#3b607e"/>
<rect x="39.3" y="114.40" width="1.0" height="1.7" fill="#434343"/>
<rect x="32.3" y="116.40" width="1.0" height="1.7" fill="#434343"/>
<rect x="33.3" y="116.40" width="8.0" height="1.7" fill="#3b607e"/>
<rect x="41.3" y="116.40" width="1.0" height="1.7" fill="#434343"/>
<rect x="36.3" y="118.40" width="1.0" height="1.7" fill="#434343"/>
<rect x="37.3" y="118.40" width="4.0" height="1.7" fill="#3b607e"/>
<rect x="42.3" y="118.40" width="6.0" height="1.7" fill="#506a78"/>
<rect x="48.3" y="118.40" width="1.0" height="1.7" fill="#515151"/>
<rect x="49.3" y="118.40" width="5.7" height="1.7" fill="#684e44"/>
<rect x="40.3" y="120.40" width="1.0" height="1.7" fill="#434343"/>
<rect x="41.3" y="120.40" width="5.0" height="1.7" fill="#3b607e"/>
<rect x="47.3" y="120.40" width="4.0" height="1.7" fill="#506a78"/>
<rect x="51.3" y="120.40" width="1.0" height="1.7" fill="#515151"/>
<rect x="52.3" y="120.40" width="2.7" height="1.7" fill="#684e44"/>
<rect x="40.3" y="122.40" width="1.0" height="1.7" fill="#434343"/>
<rect x="41.3" y="122.40" width="5.0" height="1.7" fill="#3b607e"/>
<rect x="47.3" y="122.40" width="4.0" height="1.7" fill="#506a78"/>
<rect x="51.3" y="122.40" width="1.0" height="1.7" fill="#515151"/>
<rect x="52.3" y="122.40" width="2.7" height="1.7" fill="#684e44"/>
<rect x="36.3" y="124.40" width="2.0" height="1.7" fill="#434343"/>
<rect x="38.3" y="124.40" width="4.0" height="1.7" fill="#3b607e"/>
<rect x="42.3" y="124.40" width="1.0" height="1.7" fill="#434343"/>
<rect x="36.3" y="126.40" width="1.0" height="1.7" fill="#434343"/>
<rect x="37.3" y="126.40" width="4.0" height="1.7" fill="#3b607e"/>
<rect x="42.3" y="126.40" width="6.0" height="1.7" fill="#506a78"/>
<rect x="48.3" y="126.40" width="1.0" height="1.7" fill="#515151"/>
<rect x="49.3" y="126.40" width="5.7" height="1.7" fill="#684e44"/>
<rect x="40.3" y="128.40" width="1.0" height="1.7" fill="#434343"/>
<rect x="41.3" y="128.40" width="5.0" height="1.7" fill="#3b607e"/>
<rect x="47.3" y="128.40" width="4.0" height="1.7" fill="#506a78"/>
<rect x="51.3" y="128.40" width="1.0" height="1.7" fill="#515151"/>
<rect x="52.3" y="128.40" width="2.7" height="1.7" fill="#684e44"/>
<rect x="44.3" y="130.40" width="1.0" height="1.7" fill="#434343"/>
<rect x="45.3" y="130.40" width="4.0" height="1.7" fill="#3b607e"/>
<rect x="50.3" y="130.40" width="4.7" height="1.7" fill="#506a78"/>
<rect x="48.3" y="132.40" width="1.0" height="1.7" fill="#434343"/>
<rect x="49.3" y="132.40" width="5.0" height="1.7" fill="#3b607e"/>
<rect x="48.3" y="134.40" width="1.0" height="1.7" fill="#434343"/>
<rect x="49.3" y="134.40" width="5.0" height="1.7" fill="#3b607e"/>
<rect x="48.3" y="136.40" width="1.0" height="1.7" fill="#434343"/>
<rect x="49.3" y="136.40" width="5.0" height="1.7" fill="#3b607e"/>
<rect x="48.3" y="138.40" width="1.0" height="1.7" fill="#434343"/>
<rect x="49.3" y="138.40" width="5.0" height="1.7" fill="#3b607e"/>
<rect x="48.3" y="142.40" width="1.0" height="1.7" fill="#434343"/>
<rect x="49.3" y="142.40" width="5.0" height="1.7" fill="#3b607e"/>
<rect x="48.3" y="144.40" width="1.0" height="1.7" fill="#434343"/>
<rect x="49.3" y="144.40" width="5.0" height="1.7" fill="#3b607e"/>
<rect x="44.3" y="146.40" width="2.0" height="1.7" fill="#434343"/>
<rect x="46.3" y="146.40" width="4.0" height="1.7" fill="#3b607e"/>
<rect x="50.3" y="146.40" width="1.0" height="1.7" fill="#434343"/>
<rect x="40.3" y="148.40" width="2.0" height="1.7" fill="#434343"/>
<rect x="42.3" y="148.40" width="5.0" height="1.7" fill="#3b607e"/>
<rect x="47.3" y="148.40" width="1.0" height="1.7" fill="#434343"/>
<rect x="36.3" y="150.40" width="2.0" height="1.7" fill="#434343"/>
<rect x="38.3" y="150.40" width="4.0" height="1.7" fill="#3b607e"/>
<rect x="42.3" y="150.40" width="1.0" height="1.7" fill="#434343"/>
<rect x="36.3" y="152.40" width="1.0" height="1.7" fill="#434343"/>
<rect x="37.3" y="152.40" width="4.0" height="1.7" fill="#3b607e"/>
<rect x="42.3" y="152.40" width="6.0" height="1.7" fill="#506a78"/>
<rect x="48.3" y="152.40" width="1.0" height="1.7" fill="#515151"/>
<rect x="49.3" y="152.40" width="5.7" height="1.7" fill="#684e44"/>
<rect x="40.3" y="154.40" width="1.0" height="1.7" fill="#434343"/>
<rect x="41.3" y="154.40" width="5.0" height="1.7" fill="#3b607e"/>
<rect x="47.3" y="154.40" width="4.0" height="1.7" fill="#506a78"/>
<rect x="51.3" y="154.40" width="1.0" height="1.7" fill="#515151"/>
<rect x="52.3" y="154.40" width="2.7" height="1.7" fill="#684e44"/>
<rect x="44.3" y="156.40" width="1.0" height="1.7" fill="#434343"/>
<rect x="45.3" y="156.40" width="4.0" height="1.7" fill="#3b607e"/>
<rect x="50.3" y="156.40" width="4.7" height="1.7" fill="#506a78"/>
<rect x="48.3" y="158.40" width="1.0" height="1.7" fill="#434343"/>
<rect x="49.3" y="158.40" width="5.0" height="1.7" fill="#3b607e"/>
<rect x="48.3" y="160.40" width="1.0" height="1.7" fill="#434343"/>
<rect x="49.3" y="160.40" width="5.0" height="1.7" fill="#3b607e"/>
<rect x="48.3" y="162.40" width="1.0" height="1.7" fill="#434343"/>
<rect x="49.3" y="162.40" width="5.0" height="1.7" fill="#3b607e"/>
<rect x="48.3" y="164.40" width="1.0" height="1.7" fill="#434343"/>
<rect x="49.3" y="164.40" width="5.0" height="1.7" fill="#3b607e"/>
<rect x="44.3" y="166.40" width="2.0" height="1.7" fill="#434343"/>
<rect x="46.3" y="166.40" width="4.0" height="1.7" fill="#3b607e"/>
<rect x="50.3" y="166.40" width="1.0" height="1.7" fill="#434343"/>
<rect x="40.3" y="168.40" width="2.0" height="1.7" fill="#434343"/>
<rect x="42.3" y="168.40" width="5.0" height="1.7" fill="#3b607e"/>
<rect x="47.3" y="168.40" width="1.0" height="1.7" fill="#434343"/>
<rect x="36.3" y="170.40" width="2.0" height="1.7" fill="#434343"/>
<rect x="38.3" y="170.40" width="4.0" height="1.7" fill="#3b607e"/>
<rect x="42.3" y="170.40" width="1.0" height="1.7" fill="#434343"/>
<rect x="36.3" y="172.40" width="1.0" height="1.7" fill="#434343"/>
<rect x="37.3" y="172.40" width="4.0" height="1.7" fill="#3b607e"/>
<rect x="42.3" y="172.40" width="6.0" height="1.7" fill="#506a78"/>
<rect x="48.3" y="172.40" width="1.0" height="1.7" fill="#515151"/>
<rect x="49.3" y="172.40" width="5.7" height="1.7" fill="#684e44"/>
<rect x="40.3" y="174.40" width="1.0" height="1.7" fill="#434343"/>
<rect x="41.3" y="174.40" width="5.0" height="1.7" fill="#3b607e"/>
<rect x="47.3" y="174.40" width="4.0" height="1.7" fill="#506a78"/>
<rect x="51.3" y="174.40" width="1.0" height="1.7" fill="#515151"/>
<rect x="52.3" y="174.40" width="2.7" height="1.7" fill="#684e44"/>
<rect x="44.3" y="176.40" width="1.0" height="1.7" fill="#434343"/>
<rect x="45.3" y="176.40" width="4.0" height="1.7" fill="#3b607e"/>
<rect x="49.3" y="176.40" width="1.0" height="1.7" fill="#434343"/>
<rect x="48.3" y="178.40" width="1.0" height="1.7" fill="#434343"/>
<rect x="49.3" y="178.40" width="5.0" height="1.7" fill="#3b607e"/>
<rect x="54.3" y="178.40" width="0.7" height="1.7" fill="#434343"/>
<rect x="52.3" y="180.40" width="1.0" height="1.7" fill="#434343"/>
<rect x="53.3" y="180.40" width="1.7" height="1.7" fill="#3b607e"/>
<rect x="52.3" y="188.40" width="2.0" height="1.7" fill="#434343"/>
<rect x="54.3" y="188.40" width="0.7" height="1.7" fill="#3b607e"/>
<rect x="52.3" y="190.40" width="1.0" height="1.7" fill="#434343"/>
<rect x="53.3" y="190.40" width="1.7" height="1.7" fill="#3b607e"/>
<rect x="52.3" y="208.40" width="2.0" height="1.7" fill="#434343"/>
<rect x="54.3" y="208.40" width="0.7" height="1.7" fill="#3b607e"/>
<rect x="52.3" y="210.40" width="1.0" height="1.7" fill="#434343"/>
<rect x="53.3" y="210.40" width="1.7" height="1.7" fill="#3b607e"/>
<rect x="52.3" y="218.40" width="2.0" height="1.7" fill="#434343"/>
<rect x="54.3" y="218.40" width="0.7" height="1.7" fill="#3b607e"/>
<rect x="48.3" y="222.40" width="2.0" height="1.7" fill="#434343"/>
<rect x="50.3" y="222.40" width="4.7" height="1.7" fill="#3b607e"/>
<rect x="44.3" y="224.40" width="2.0" height="1.7" fill="#434343"/>
<rect x="46.3" y="224.40" width="4.0" height="1.7" fill="#3b607e"/>
<rect x="50.3" y="224.40" width="1.0" height="1.7" fill="#434343"/>
<rect x="44.3" y="226.40" width="1.0" height="1.7" fill="#434343"/>
<rect x="45.3" y="226.40" width="4.0" height="1.7" fill="#3b607e"/>
<rect x="49.3" y="226.40" width="1.0" height="1.7" fill="#434343"/>
<rect x="48.3" y="228.40" width="1.0" height="1.7" fill="#434343"/>
<rect x="49.3" y="228.40" width="5.0" height="1.7" fill="#3b607e"/>
<rect x="48.3" y="230.40" width="1.0" height="1.7" fill="#434343"/>
<rect x="49.3" y="230.40" width="5.0" height="1.7" fill="#3b607e"/>
<rect x="48.3" y="232.40" width="1.0" height="1.7" fill="#434343"/>
<rect x="49.3" y="232.40" width="5.0" height="1.7" fill="#3b607e"/>
<rect x="48.3" y="234.40" width="1.0" height="1.7" fill="#434343"/>
<rect x="49.3" y="234.40" width="5.0" height="1.7" fill="#3b607e"/>
<rect x="48.3" y="236.40" width="1.0" height="1.7" fill="#434343"/>
<rect x="49.3" y="236.40" width="5.0" height="1.7" fill="#3b607e"/>
<rect x="48.3" y="238.40" width="1.0" height="1.7" fill="#434343"/>
<rect x="49.3" y="238.40" width="5.0" height="1.7" fill="#3b607e"/>
<rect x="44.3" y="240.40" width="2.0" height="1.7" fill="#434343"/>
<rect x="46.3" y="240.40" width="4.0" height="1.7" fill="#3b607e"/>
<rect x="50.3" y="240.40" width="1.0" height="1.7" fill="#434343"/>
<rect x="40.3" y="242.40" width="2.0" height="1.7" fill="#434343"/>
<rect x="42.3" y="242.40" width="5.0" height="1.7" fill="#3b607e"/>
<rect x="47.3" y="242.40" width="1.0" height="1.7" fill="#434343"/>
<rect x="36.3" y="246.40" width="2.0" height="1.7" fill="#434343"/>
<rect x="38.3" y="246.40" width="4.0" height="1.7" fill="#3b607e"/>
<rect x="42.3" y="246.40" width="1.0" height="1.7" fill="#434343"/>
<rect x="36.3" y="250.40" width="1.0" height="1.7" fill="#434343"/>
<rect x="37.3" y="250.40" width="4.0" height="1.7" fill="#3b607e"/>
<rect x="42.3" y="250.40" width="6.0" height="1.7" fill="#506a78"/>
<rect x="48.3" y="250.40" width="1.0" height="1.7" fill="#515151"/>
<rect x="49.3" y="250.40" width="5.7" height="1.7" fill="#684e44"/>
<rect x="40.3" y="252.40" width="1.0" height="1.7" fill="#434343"/>
<rect x="41.3" y="252.40" width="5.0" height="1.7" fill="#3b607e"/>
<rect x="47.3" y="252.40" width="4.0" height="1.7" fill="#506a78"/>
<rect x="51.3" y="252.40" width="1.0" height="1.7" fill="#515151"/>
<rect x="52.3" y="252.40" width="2.7" height="1.7" fill="#684e44"/>
<rect x="44.3" y="254.40" width="1.0" height="1.7" fill="#434343"/>
<rect x="45.3" y="254.40" width="4.0" height="1.7" fill="#3b607e"/>
<rect x="50.3" y="254.40" width="4.7" height="1.7" fill="#506a78"/>
<rect x="48.3" y="256.40" width="1.0" height="1.7" fill="#434343"/>
<rect x="49.3" y="256.40" width="5.0" height="1.7" fill="#3b607e"/>
<rect x="48.3" y="258.40" width="1.0" height="1.7" fill="#434343"/>
<rect x="49.3" y="258.40" width="5.0" height="1.7" fill="#3b607e"/>
<rect x="48.3" y="260.40" width="1.0" height="1.7" fill="#434343"/>
<rect x="49.3" y="260.40" width="5.0" height="1.7" fill="#3b607e"/>
<rect x="48.3" y="262.40" width="1.0" height="1.7" fill="#434343"/>
<rect x="49.3" y="262.40" width="5.0" height="1.7" fill="#3b607e"/>
<rect x="44.3" y="264.40" width="2.0" height="1.7" fill="#434343"/>
<rect x="46.3" y="264.40" width="4.0" height="1.7" fill="#3b607e"/>
<rect x="50.3" y="264.40" width="1.0" height="1.7" fill="#434343"/>
<rect x="40.3" y="266.40" width="2.0" height="1.7" fill="#434343"/>
<rect x="42.3" y="266.40" width="5.0" height="1.7" fill="#3b607e"/>
<rect x="47.3" y="266.40" width="1.0" height="1.7" fill="#434343"/>
<rect x="36.3" y="268.40" width="2.0" height="1.7" fill="#434343"/>
<rect x="38.3" y="268.40" width="4.0" height="1.7" fill="#3b607e"/>
<rect x="42.3" y="268.40" width="1.0" height="1.7" fill="#434343"/>
<rect x="32.3" y="272.40" width="2.0" height="1.7" fill="#434343"/>
<rect x="34.3" y="272.40" width="8.0" height="1.7" fill="#3b607e"/>
<rect x="42.3" y="272.40" width="1.0" height="1.7" fill="#434343"/>
<rect x="28.3" y="274.40" width="2.0" height="1.7" fill="#434343"/>
<rect x="30.3" y="274.40" width="5.0" height="1.7" fill="#3b607e"/>
<rect x="35.3" y="274.40" width="1.0" height="1.7" fill="#434343"/>
<rect x="24.3" y="276.40" width="2.0" height="1.7" fill="#434343"/>
<rect x="26.3" y="276.40" width="4.0" height="1.7" fill="#3b607e"/>
<rect x="30.3" y="276.40" width="1.0" height="1.7" fill="#434343"/>
<rect x="20.3" y="278.40" width="2.0" height="1.7" fill="#434343"/>
<rect x="22.3" y="278.40" width="5.0" height="1.7" fill="#3b607e"/>
<rect x="27.3" y="278.40" width="1.0" height="1.7" fill="#434343"/>
<rect x="16.3" y="280.40" width="2.0" height="1.7" fill="#434343"/>
<rect x="18.3" y="280.40" width="6.0" height="1.7" fill="#3b607e"/>
<rect x="24.3" y="280.40" width="1.0" height="1.7" fill="#434343"/>
<rect x="16.3" y="284.40" width="1.0" height="1.7" fill="#434343"/>
<rect x="17.3" y="284.40" width="6.0" height="1.7" fill="#3b607e"/>
<rect x="24.3" y="284.40" width="2.0" height="1.7" fill="#506a78"/>
<rect x="26.3" y="284.40" width="1.0" height="1.7" fill="#515151"/>
<rect x="27.3" y="284.40" width="27.7" height="1.7" fill="#684e44"/>
<rect x="20.3" y="286.40" width="1.0" height="1.7" fill="#434343"/>
<rect x="21.3" y="286.40" width="5.0" height="1.7" fill="#3b607e"/>
<rect x="27.3" y="286.40" width="4.0" height="1.7" fill="#506a78"/>
<rect x="31.3" y="286.40" width="1.0" height="1.7" fill="#515151"/>
<rect x="32.3" y="286.40" width="6.0" height="1.7" fill="#684e44"/>
<rect x="38.3" y="286.40" width="1.0" height="1.7" fill="#434343"/>
<rect x="39.3" y="286.40" width="4.0" height="1.7" fill="#3b607e"/>
<rect x="43.3" y="286.40" width="1.0" height="1.7" fill="#676767"/>
<rect x="44.3" y="286.40" width="6.0" height="1.7" fill="#3b607e"/>
<rect x="50.3" y="286.40" width="1.0" height="1.7" fill="#676767"/>
<rect x="51.3" y="286.40" width="3.7" height="1.7" fill="#3b607e"/>
<rect x="20.3" y="288.40" width="1.0" height="1.7" fill="#434343"/>
<rect x="21.3" y="288.40" width="5.0" height="1.7" fill="#3b607e"/>
<rect x="27.3" y="288.40" width="4.0" height="1.7" fill="#506a78"/>
<rect x="31.3" y="288.40" width="1.0" height="1.7" fill="#515151"/>
<rect x="32.3" y="288.40" width="7.0" height="1.7" fill="#684e44"/>
<rect x="39.3" y="288.40" width="1.0" height="1.7" fill="#434343"/>
<rect x="40.3" y="288.40" width="6.0" height="1.7" fill="#3b607e"/>
<rect x="46.3" y="288.40" width="1.0" height="1.7" fill="#676767"/>
<rect x="47.3" y="288.40" width="7.7" height="1.7" fill="#3b607e"/>
<rect x="20.3" y="290.40" width="1.0" height="1.7" fill="#434343"/>
<rect x="21.3" y="290.40" width="5.0" height="1.7" fill="#3b607e"/>
<rect x="27.3" y="290.40" width="4.0" height="1.7" fill="#506a78"/>
<rect x="31.3" y="290.40" width="1.0" height="1.7" fill="#515151"/>
<rect x="32.3" y="290.40" width="6.0" height="1.7" fill="#684e44"/>
<rect x="39.3" y="290.40" width="4.0" height="1.7" fill="#506a78"/>
<rect x="43.3" y="290.40" width="1.0" height="1.7" fill="#515151"/>
<rect x="44.3" y="290.40" width="5.0" height="1.7" fill="#684e44"/>
<rect x="49.3" y="290.40" width="1.0" height="1.7" fill="#434343"/>
<rect x="24.3" y="292.40" width="1.0" height="1.7" fill="#434343"/>
<rect x="25.3" y="292.40" width="4.0" height="1.7" fill="#3b607e"/>
<rect x="30.3" y="292.40" width="6.0" height="1.7" fill="#506a78"/>
<rect x="36.3" y="292.40" width="1.0" height="1.7" fill="#515151"/>
<rect x="37.3" y="292.40" width="17.7" height="1.7" fill="#684e44"/>
<rect x="28.3" y="294.40" width="1.0" height="1.7" fill="#434343"/>
<rect x="29.3" y="294.40" width="5.0" height="1.7" fill="#3b607e"/>
<rect x="35.3" y="294.40" width="4.0" height="1.7" fill="#506a78"/>
<rect x="39.3" y="294.40" width="1.0" height="1.7" fill="#515151"/>
<rect x="40.3" y="294.40" width="6.0" height="1.7" fill="#684e44"/>
<rect x="47.3" y="294.40" width="6.0" height="1.7" fill="#506a78"/>
<rect x="53.3" y="294.40" width="1.0" height="1.7" fill="#515151"/>
<rect x="54.3" y="294.40" width="0.7" height="1.7" fill="#684e44"/>
<rect x="28.3" y="296.40" width="1.0" height="1.7" fill="#434343"/>
<rect x="29.3" y="296.40" width="5.0" height="1.7" fill="#3b607e"/>
<rect x="35.3" y="296.40" width="4.0" height="1.7" fill="#506a78"/>
<rect x="39.3" y="296.40" width="1.0" height="1.7" fill="#515151"/>
<rect x="40.3" y="296.40" width="10.0" height="1.7" fill="#684e44"/>
<rect x="51.3" y="296.40" width="2.0" height="1.7" fill="#434343"/>
<rect x="28.3" y="298.40" width="1.0" height="1.7" fill="#434343"/>
<rect x="29.3" y="298.40" width="5.0" height="1.7" fill="#3b607e"/>
<rect x="35.3" y="298.40" width="4.0" height="1.7" fill="#506a78"/>
<rect x="39.3" y="298.40" width="1.0" height="1.7" fill="#515151"/>
<rect x="40.3" y="298.40" width="8.0" height="1.7" fill="#684e44"/>
<rect x="49.3" y="298.40" width="2.0" height="1.7" fill="#434343"/>
<rect x="28.3" y="300.40" width="1.0" height="1.7" fill="#434343"/>
<rect x="29.3" y="300.40" width="5.0" height="1.7" fill="#3b607e"/>
<rect x="35.3" y="300.40" width="4.0" height="1.7" fill="#506a78"/>
<rect x="39.3" y="300.40" width="1.0" height="1.7" fill="#515151"/>
<rect x="40.3" y="300.40" width="13.0" height="1.7" fill="#684e44"/>
<rect x="54.3" y="300.40" width="0.7" height="1.7" fill="#506a78"/>
<rect x="28.3" y="302.40" width="1.0" height="1.7" fill="#434343"/>
<rect x="29.3" y="302.40" width="7.0" height="1.7" fill="#3b607e"/>
<rect x="36.3" y="302.40" width="2.0" height="1.7" fill="#434343"/>
<rect x="28.3" y="304.40" width="1.0" height="1.7" fill="#434343"/>
<rect x="29.3" y="304.40" width="5.0" height="1.7" fill="#3b607e"/>
<rect x="35.3" y="304.40" width="4.0" height="1.7" fill="#506a78"/>
<rect x="39.3" y="304.40" width="1.0" height="1.7" fill="#515151"/>
<rect x="40.3" y="304.40" width="7.0" height="1.7" fill="#684e44"/>
<rect x="48.3" y="304.40" width="3.0" height="1.7" fill="#506a78"/>
<rect x="51.3" y="304.40" width="1.0" height="1.7" fill="#515151"/>
<rect x="52.3" y="304.40" width="2.7" height="1.7" fill="#684e44"/>
<rect x="28.3" y="306.40" width="1.0" height="1.7" fill="#434343"/>
<rect x="29.3" y="306.40" width="6.0" height="1.7" fill="#3b607e"/>
<rect x="35.3" y="306.40" width="2.0" height="1.7" fill="#434343"/>
<rect x="28.3" y="308.40" width="1.0" height="1.7" fill="#434343"/>
<rect x="29.3" y="308.40" width="5.0" height="1.7" fill="#3b607e"/>
<rect x="35.3" y="308.40" width="4.0" height="1.7" fill="#506a78"/>
<rect x="39.3" y="308.40" width="1.0" height="1.7" fill="#515151"/>
<rect x="40.3" y="308.40" width="10.0" height="1.7" fill="#684e44"/>
<rect x="51.3" y="308.40" width="3.7" height="1.7" fill="#506a78"/>
<rect x="28.3" y="310.40" width="1.0" height="1.7" fill="#434343"/>
<rect x="29.3" y="310.40" width="5.0" height="1.7" fill="#3b607e"/>
<rect x="35.3" y="310.40" width="4.0" height="1.7" fill="#506a78"/>
<rect x="39.3" y="310.40" width="1.0" height="1.7" fill="#515151"/>
<rect x="40.3" y="310.40" width="7.0" height="1.7" fill="#684e44"/>
<rect x="48.3" y="310.40" width="6.0" height="1.7" fill="#506a78"/>
<rect x="54.3" y="310.40" width="0.7" height="1.7" fill="#515151"/>
<rect x="32.3" y="312.40" width="1.0" height="1.7" fill="#434343"/>
<rect x="33.3" y="312.40" width="5.0" height="1.7" fill="#3b607e"/>
<rect x="39.3" y="312.40" width="4.0" height="1.7" fill="#506a78"/>
<rect x="43.3" y="312.40" width="1.0" height="1.7" fill="#515151"/>
<rect x="44.3" y="312.40" width="9.0" height="1.7" fill="#684e44"/>
<rect x="54.3" y="312.40" width="0.7" height="1.7" fill="#506a78"/>
<rect x="28.3" y="314.40" width="1.0" height="1.7" fill="#434343"/>
<rect x="29.3" y="314.40" width="3.0" height="1.7" fill="#3b607e"/>
<rect x="32.3" y="314.40" width="2.0" height="1.7" fill="#434343"/>
<rect x="24.3" y="316.40" width="2.0" height="1.7" fill="#434343"/>
<rect x="26.3" y="316.40" width="4.0" height="1.7" fill="#3b607e"/>
<rect x="30.3" y="316.40" width="1.0" height="1.7" fill="#434343"/>
<rect x="20.3" y="318.40" width="2.0" height="1.7" fill="#434343"/>
<rect x="22.3" y="318.40" width="5.0" height="1.7" fill="#3b607e"/>
<rect x="27.3" y="318.40" width="1.0" height="1.7" fill="#434343"/>
<rect x="16.3" y="320.40" width="2.0" height="1.7" fill="#434343"/>
<rect x="18.3" y="320.40" width="6.0" height="1.7" fill="#3b607e"/>
<rect x="24.3" y="320.40" width="1.0" height="1.7" fill="#434343"/>
<rect x="16.3" y="326.40" width="1.0" height="1.7" fill="#434343"/>
<rect x="17.3" y="326.40" width="6.0" height="1.7" fill="#3b607e"/>
<rect x="24.3" y="326.40" width="2.0" height="1.7" fill="#506a78"/>
<rect x="26.3" y="326.40" width="1.0" height="1.7" fill="#515151"/>
<rect x="27.3" y="326.40" width="27.7" height="1.7" fill="#684e44"/>
<rect x="20.3" y="328.40" width="1.0" height="1.7" fill="#434343"/>
<rect x="21.3" y="328.40" width="5.0" height="1.7" fill="#3b607e"/>
<rect x="27.3" y="328.40" width="4.0" height="1.7" fill="#506a78"/>
<rect x="31.3" y="328.40" width="1.0" height="1.7" fill="#515151"/>
<rect x="32.3" y="328.40" width="6.0" height="1.7" fill="#684e44"/>
<rect x="38.3" y="328.40" width="1.0" height="1.7" fill="#434343"/>
<rect x="39.3" y="328.40" width="4.0" height="1.7" fill="#3b607e"/>
<rect x="43.3" y="328.40" width="1.0" height="1.7" fill="#676767"/>
<rect x="44.3" y="328.40" width="6.0" height="1.7" fill="#3b607e"/>
<rect x="50.3" y="328.40" width="1.0" height="1.7" fill="#676767"/>
<rect x="51.3" y="328.40" width="3.7" height="1.7" fill="#3b607e"/>
<rect x="20.3" y="330.40" width="1.0" height="1.7" fill="#434343"/>
<rect x="21.3" y="330.40" width="5.0" height="1.7" fill="#3b607e"/>
<rect x="27.3" y="330.40" width="4.0" height="1.7" fill="#506a78"/>
<rect x="31.3" y="330.40" width="1.0" height="1.7" fill="#515151"/>
<rect x="32.3" y="330.40" width="7.0" height="1.7" fill="#684e44"/>
<rect x="39.3" y="330.40" width="1.0" height="1.7" fill="#434343"/>
<rect x="40.3" y="330.40" width="6.0" height="1.7" fill="#3b607e"/>
<rect x="46.3" y="330.40" width="1.0" height="1.7" fill="#676767"/>
<rect x="47.3" y="330.40" width="7.7" height="1.7" fill="#3b607e"/>
<rect x="20.3" y="332.40" width="1.0" height="1.7" fill="#434343"/>
<rect x="21.3" y="332.40" width="5.0" height="1.7" fill="#3b607e"/>
<rect x="27.3" y="332.40" width="4.0" height="1.7" fill="#506a78"/>
<rect x="31.3" y="332.40" width="1.0" height="1.7" fill="#515151"/>
<rect x="32.3" y="332.40" width="10.0" height="1.7" fill="#684e44"/>
<rect x="42.3" y="332.40" width="1.0" height="1.7" fill="#434343"/>
<rect x="43.3" y="332.40" width="1.0" height="1.7" fill="#676767"/>
<rect x="44.3" y="332.40" width="1.0" height="1.7" fill="#676767"/>
<rect x="45.3" y="332.40" width="2.0" height="1.7" fill="#434343"/>
<rect x="47.3" y="332.40" width="5.0" height="1.7" fill="#3b607e"/>
<rect x="52.3" y="332.40" width="1.0" height="1.7" fill="#434343"/>
<rect x="20.3" y="334.40" width="1.0" height="1.7" fill="#434343"/>
<rect x="21.3" y="334.40" width="5.0" height="1.7" fill="#3b607e"/>
<rect x="27.3" y="334.40" width="4.0" height="1.7" fill="#506a78"/>
<rect x="31.3" y="334.40" width="1.0" height="1.7" fill="#515151"/>
<rect x="32.3" y="334.40" width="6.0" height="1.7" fill="#684e44"/>
<rect x="39.3" y="334.40" width="4.0" height="1.7" fill="#506a78"/>
<rect x="43.3" y="334.40" width="1.0" height="1.7" fill="#515151"/>
<rect x="44.3" y="334.40" width="5.0" height="1.7" fill="#684e44"/>
<rect x="49.3" y="334.40" width="1.0" height="1.7" fill="#434343"/>
<rect x="24.3" y="336.40" width="1.0" height="1.7" fill="#434343"/>
<rect x="25.3" y="336.40" width="6.0" height="1.7" fill="#3b607e"/>
<rect x="32.3" y="336.40" width="6.0" height="1.7" fill="#506a78"/>
<rect x="38.3" y="336.40" width="1.0" height="1.7" fill="#515151"/>
<rect x="39.3" y="336.40" width="15.7" height="1.7" fill="#684e44"/>
<rect x="28.3" y="338.40" width="1.0" height="1.7" fill="#434343"/>
<rect x="29.3" y="338.40" width="5.0" height="1.7" fill="#3b607e"/>
<rect x="35.3" y="338.40" width="4.0" height="1.7" fill="#506a78"/>
<rect x="39.3" y="338.40" width="1.0" height="1.7" fill="#515151"/>
<rect x="40.3" y="338.40" width="6.0" height="1.7" fill="#684e44"/>
<rect x="46.3" y="338.40" width="2.0" height="1.7" fill="#434343"/>
<rect x="28.3" y="340.40" width="1.0" height="1.7" fill="#434343"/>
<rect x="29.3" y="340.40" width="6.0" height="1.7" fill="#3b607e"/>
<rect x="36.3" y="340.40" width="4.0" height="1.7" fill="#506a78"/>
<rect x="40.3" y="340.40" width="1.0" height="1.7" fill="#515151"/>
<rect x="41.3" y="340.40" width="8.0" height="1.7" fill="#684e44"/>
<rect x="50.3" y="340.40" width="4.7" height="1.7" fill="#506a78"/>
<rect x="28.3" y="342.40" width="1.0" height="1.7" fill="#434343"/>
<rect x="29.3" y="342.40" width="6.0" height="1.7" fill="#3b607e"/>
<rect x="36.3" y="342.40" width="4.0" height="1.7" fill="#506a78"/>
<rect x="40.3" y="342.40" width="1.0" height="1.7" fill="#515151"/>
<rect x="41.3" y="342.40" width="6.0" height="1.7" fill="#684e44"/>
<rect x="48.3" y="342.40" width="6.0" height="1.7" fill="#506a78"/>
<rect x="54.3" y="342.40" width="0.7" height="1.7" fill="#515151"/>
<rect x="28.3" y="344.40" width="1.0" height="1.7" fill="#434343"/>
<rect x="29.3" y="344.40" width="6.0" height="1.7" fill="#3b607e"/>
<rect x="36.3" y="344.40" width="4.0" height="1.7" fill="#506a78"/>
<rect x="40.3" y="344.40" width="1.0" height="1.7" fill="#515151"/>
<rect x="41.3" y="344.40" width="7.0" height="1.7" fill="#684e44"/>
<rect x="49.3" y="344.40" width="5.7" height="1.7" fill="#506a78"/>
<rect x="28.3" y="346.40" width="1.0" height="1.7" fill="#434343"/>
<rect x="29.3" y="346.40" width="6.0" height="1.7" fill="#3b607e"/>
<rect x="36.3" y="346.40" width="4.0" height="1.7" fill="#506a78"/>
<rect x="40.3" y="346.40" width="1.0" height="1.7" fill="#515151"/>
<rect x="41.3" y="346.40" width="7.0" height="1.7" fill="#684e44"/>
<rect x="49.3" y="346.40" width="5.7" height="1.7" fill="#506a78"/>
<rect x="28.3" y="348.40" width="1.0" height="1.7" fill="#434343"/>
<rect x="29.3" y="348.40" width="6.0" height="1.7" fill="#3b607e"/>
<rect x="36.3" y="348.40" width="4.0" height="1.7" fill="#506a78"/>
<rect x="40.3" y="348.40" width="1.0" height="1.7" fill="#515151"/>
<rect x="41.3" y="348.40" width="4.0" height="1.7" fill="#684e44"/>
<rect x="46.3" y="348.40" width="6.0" height="1.7" fill="#506a78"/>
<rect x="52.3" y="348.40" width="1.0" height="1.7" fill="#515151"/>
<rect x="53.3" y="348.40" width="1.7" height="1.7" fill="#684e44"/>
<rect x="24.3" y="350.40" width="2.0" height="1.7" fill="#434343"/>
<rect x="26.3" y="350.40" width="4.0" height="1.7" fill="#3b607e"/>
<rect x="30.3" y="350.40" width="1.0" height="1.7" fill="#434343"/>
<rect x="20.3" y="352.40" width="2.0" height="1.7" fill="#434343"/>
<rect x="22.3" y="352.40" width="5.0" height="1.7" fill="#3b607e"/>
<rect x="27.3" y="352.40" width="1.0" height="1.7" fill="#434343"/>
<rect x="16.3" y="354.40" width="2.0" height="1.7" fill="#434343"/>
<rect x="18.3" y="354.40" width="6.0" height="1.7" fill="#3b607e"/>
<rect x="24.3" y="354.40" width="1.0" height="1.7" fill="#434343"/>
<rect x="16.3" y="360.40" width="1.0" height="1.7" fill="#434343"/>
<rect x="17.3" y="360.40" width="6.0" height="1.7" fill="#3b607e"/>
<rect x="24.3" y="360.40" width="2.0" height="1.7" fill="#506a78"/>
<rect x="26.3" y="360.40" width="1.0" height="1.7" fill="#515151"/>
<rect x="27.3" y="360.40" width="26.0" height="1.7" fill="#684e44"/>
<rect x="54.3" y="360.40" width="0.7" height="1.7" fill="#506a78"/>
<rect x="20.3" y="362.40" width="1.0" height="1.7" fill="#434343"/>
<rect x="21.3" y="362.40" width="5.0" height="1.7" fill="#3b607e"/>
<rect x="27.3" y="362.40" width="4.0" height="1.7" fill="#506a78"/>
<rect x="31.3" y="362.40" width="1.0" height="1.7" fill="#515151"/>
<rect x="32.3" y="362.40" width="6.0" height="1.7" fill="#684e44"/>
<rect x="38.3" y="362.40" width="1.0" height="1.7" fill="#434343"/>
<rect x="39.3" y="362.40" width="6.0" height="1.7" fill="#3b607e"/>
<rect x="46.3" y="362.40" width="8.7" height="1.7" fill="#3b607e"/>
<rect x="20.3" y="364.40" width="1.0" height="1.7" fill="#434343"/>
<rect x="21.3" y="364.40" width="5.0" height="1.7" fill="#3b607e"/>
<rect x="27.3" y="364.40" width="4.0" height="1.7" fill="#506a78"/>
<rect x="31.3" y="364.40" width="1.0" height="1.7" fill="#515151"/>
<rect x="32.3" y="364.40" width="11.0" height="1.7" fill="#684e44"/>
<rect x="43.3" y="364.40" width="1.0" height="1.7" fill="#434343"/>
<rect x="44.3" y="364.40" width="6.0" height="1.7" fill="#3b607e"/>
<rect x="50.3" y="364.40" width="1.0" height="1.7" fill="#676767"/>
<rect x="51.3" y="364.40" width="3.7" height="1.7" fill="#3b607e"/>
<rect x="20.3" y="366.40" width="1.0" height="1.7" fill="#434343"/>
<rect x="21.3" y="366.40" width="5.0" height="1.7" fill="#3b607e"/>
<rect x="27.3" y="366.40" width="4.0" height="1.7" fill="#506a78"/>
<rect x="31.3" y="366.40" width="1.0" height="1.7" fill="#515151"/>
<rect x="32.3" y="366.40" width="11.0" height="1.7" fill="#684e44"/>
<rect x="43.3" y="366.40" width="1.0" height="1.7" fill="#434343"/>
<rect x="44.3" y="366.40" width="4.0" height="1.7" fill="#3b607e"/>
<rect x="48.3" y="366.40" width="1.0" height="1.7" fill="#676767"/>
<rect x="49.3" y="366.40" width="4.0" height="1.7" fill="#3b607e"/>
<rect x="53.3" y="366.40" width="1.7" height="1.7" fill="#434343"/>
<rect x="20.3" y="368.40" width="1.0" height="1.7" fill="#434343"/>
<rect x="21.3" y="368.40" width="5.0" height="1.7" fill="#3b607e"/>
<rect x="27.3" y="368.40" width="4.0" height="1.7" fill="#506a78"/>
<rect x="31.3" y="368.40" width="1.0" height="1.7" fill="#515151"/>
<rect x="32.3" y="368.40" width="9.0" height="1.7" fill="#684e44"/>
<rect x="41.3" y="368.40" width="1.0" height="1.7" fill="#434343"/>
<rect x="42.3" y="368.40" width="1.0" height="1.7" fill="#676767"/>
<rect x="43.3" y="368.40" width="11.7" height="1.7" fill="#684e44"/>
<rect x="20.3" y="370.40" width="1.0" height="1.7" fill="#434343"/>
<rect x="21.3" y="370.40" width="5.0" height="1.7" fill="#3b607e"/>
<rect x="27.3" y="370.40" width="4.0" height="1.7" fill="#506a78"/>
<rect x="31.3" y="370.40" width="1.0" height="1.7" fill="#515151"/>
<rect x="32.3" y="370.40" width="8.0" height="1.7" fill="#684e44"/>
<rect x="40.3" y="370.40" width="1.0" height="1.7" fill="#434343"/>
<rect x="41.3" y="370.40" width="1.0" height="1.7" fill="#676767"/>
<rect x="42.3" y="370.40" width="1.0" height="1.7" fill="#676767"/>
<rect x="43.3" y="370.40" width="2.0" height="1.7" fill="#434343"/>
<rect x="45.3" y="370.40" width="5.0" height="1.7" fill="#3b607e"/>
<rect x="50.3" y="370.40" width="1.0" height="1.7" fill="#434343"/>
<rect x="53.3" y="370.40" width="1.0" height="1.7" fill="#434343"/>
<rect x="54.3" y="370.40" width="0.7" height="1.7" fill="#676767"/>
<rect x="16.3" y="372.40" width="2.0" height="1.7" fill="#434343"/>
<rect x="18.3" y="372.40" width="6.0" height="1.7" fill="#3b607e"/>
<rect x="24.3" y="372.40" width="1.0" height="1.7" fill="#434343"/>
<rect x="16.3" y="378.40" width="1.0" height="1.7" fill="#434343"/>
<rect x="17.3" y="378.40" width="8.0" height="1.7" fill="#3b607e"/>
<rect x="26.3" y="378.40" width="2.0" height="1.7" fill="#506a78"/>
<rect x="28.3" y="378.40" width="1.0" height="1.7" fill="#515151"/>
<rect x="29.3" y="378.40" width="24.0" height="1.7" fill="#684e44"/>
<rect x="54.3" y="378.40" width="0.7" height="1.7" fill="#506a78"/>
<rect x="12.3" y="382.40" width="2.0" height="1.7" fill="#434343"/>
<rect x="14.3" y="382.40" width="4.0" height="1.7" fill="#3b607e"/>
<rect x="18.3" y="382.40" width="1.0" height="1.7" fill="#434343"/>
<rect x="8.3" y="384.40" width="2.0" height="1.7" fill="#434343"/>
<rect x="10.3" y="384.40" width="4.0" height="1.7" fill="#3b607e"/>
<rect x="14.3" y="384.40" width="1.0" height="1.7" fill="#434343"/>
</svg></div>

<!-- activity bar -->
<div id="act">
<svg style="left:0;top:0" width="33" height="663" viewBox="0 0 33 663" fill="none" stroke="#858585" stroke-width="1.05" stroke-linejoin="round">
<!-- files -->
<path d="M14.1 12.9 V6.9 H20.2 L23.9 10.6 V20.3 H14.1 Z"/><path d="M20.1 7 V10.7 H23.8"/><path d="M14.1 13.2 H9.5 V23.9 H19.6 V20.3"/>
<!-- search -->
<circle cx="19" cy="46.2" r="4.9"/><path d="M15.6 49.8 L9.6 57.4"/>
<!-- source control -->
<circle cx="12.7" cy="76.9" r="1.9"/><circle cx="20.5" cy="79.6" r="1.9"/><circle cx="12.7" cy="88.3" r="1.9"/><path d="M12.7 78.8 V86.4"/><path d="M20.5 81.5 C20.5 85 12.7 83 12.7 86.4"/>
<!-- run and debug -->
<path d="M13.8 115.9 V108.7 L24.6 115.4 L17.5 119.7"/>
<ellipse cx="12.4" cy="120.9" rx="2.3" ry="3.4"/><path d="M12.4 117.4 V116.6 M10 119.2 L8 117.8 M14.8 119.2 L16.8 117.8 M10 121 H7.8 M14.8 121 H17 M10 122.8 L8 124.3 M14.8 122.8 L16.8 124.3" stroke-width="0.9"/>
<!-- extensions -->
<path d="M8.9 144.9 H14.6 V151.6 H21.2 V157.1 H8.9 Z"/><path d="M8.9 151.6 H14.6 V157.1"/><rect x="18" y="141.5" width="6.8" height="6.6" rx="0.6"/>
<!-- flask -->
<path d="M13.3 175.5 H19.9"/><path d="M14.9 175.5 V181.3 L10.6 189.3 H22.6 L18.3 181.3 V175.5"/><path d="M12.8 185.4 H20.4"/>
<!-- remote -->
<path d="M17.6 214.6 V210.3 H24.2 V218.9 H21.4"/><path d="M12.9 215.7 H20.3 V224.3 H12.9 Z"/><path d="M14.6 217.8 H18.4 M14.6 220.2 H18.4 M14.6 222.5 H18.4 M19.4 212.5 H22.6 M21.2 214.5 H22.6" stroke-width="0.9"/><path d="M11.6 215.6 C8.2 215.6 8 212 11 212 H15.4 M13.2 209.6 L15.6 212 L13.2 214.4" stroke-width="1"/>
<!-- account -->
<circle cx="16.5" cy="612.3" r="8"/><circle cx="16.5" cy="610" r="2.9"/><path d="M11.6 618 C12.6 613.6 20.4 613.6 21.4 618"/>
<!-- gear -->
<circle cx="16.3" cy="646.3" r="2"/><path d="M14.74 638.45 L17.86 638.45 L17.77 640.38 L19.45 641.07 L20.74 639.65 L22.95 641.86 L21.53 643.15 L22.22 644.83 L24.15 644.74 L24.15 647.86 L22.22 647.77 L21.53 649.45 L22.95 650.74 L20.74 652.95 L19.45 651.53 L17.77 652.22 L17.86 654.15 L14.74 654.15 L14.83 652.22 L13.15 651.53 L11.86 652.95 L9.65 650.74 L11.07 649.45 L10.38 647.77 L8.45 647.86 L8.45 644.74 L10.38 644.83 L11.07 643.15 L9.65 641.86 L11.86 639.65 L13.15 641.07 L14.83 640.38 Z"/>
</svg>
<div class="abs" style="left:15.1px;top:82.4px;width:12.6px;height:12.6px;border-radius:6.3px;background:#007acc"></div>
<div class="abs" style="left:15.1px;top:82.4px;width:12.6px;height:12.6px;line-height:12.8px;text-align:center;font-size:6.6px;font-weight:bold;color:#fff">40</div>
<div class="abs" style="left:16.9px;top:647px;width:10.8px;height:10.8px;border-radius:5.4px;background:#007acc"></div>
<div class="abs" style="left:16.9px;top:647px;width:10.8px;height:10.8px;line-height:11px;text-align:center;font-size:6.8px;font-weight:bold;color:#fff">1</div>
</div>

<!-- tabs -->
<div id="tabs">
<div class="tab" style="left:0;width:83.4px;"></div>
<div class="abs" style="left:83.4px;top:0;width:1px;height:24px;background:#555555"></div>
<div class="tab" style="left:84.4px;width:130.6px;"></div>
<div class="tab" style="left:215px;width:233px;"></div>
<div class="tab" style="left:448px;width:229px;"></div>
<div class="tab active" style="left:677px;width:166px;border-right:none"></div>
</div>
<div id="bc"></div>
<svg class="abs" style="left:0;top:0" width="1220" height="40" viewBox="0 0 1220 40" fill="none">
<!-- gear (conf) -->
<g stroke="#6d8086" fill="none"><circle cx="46.9" cy="11.8" r="2.5" stroke-width="1.5"/><path d="M46.9 7.9 V8.9 M46.9 14.7 V15.7 M43 11.8 H44 M49.8 11.8 H50.8 M44.1 9 L44.9 9.8 M49.7 9 L48.9 9.8 M44.1 14.6 L44.9 13.8 M49.7 14.6 L48.9 13.8" stroke-width="1.5"/></g>
<!-- pin -->
<g stroke="#969696" stroke-width="0.9" fill="none" stroke-linejoin="round"><path d="M103.4 8.4 H108.6 M104.4 8.4 V12.6 L102.5 14.3 H109.5 L107.6 12.6 V8.4 M106 14.3 V17"/></g>
<!-- rss icons -->
<g id="rss1" fill="#e37933" transform="translate(127.5 15) scale(0.86) translate(-127.5 -15)"><circle cx="128.6" cy="14.1" r="0.95"/><path d="M127.7 10.6 a4.4 4.4 0 0 1 4.4 4.4 h-1.5 a2.9 2.9 0 0 0 -2.9 -2.9 z"/><path d="M127.7 8.6 a6.4 6.4 0 0 1 6.4 6.4 h-1.3 a5.1 5.1 0 0 0 -5.1 -5.1 z"/></g>
<g fill="#e37933" transform="translate(593.3 0) translate(127.5 15) scale(0.86) translate(-127.5 -15)"><circle cx="128.6" cy="14.1" r="0.95"/><path d="M127.7 10.6 a4.4 4.4 0 0 1 4.4 4.4 h-1.5 a2.9 2.9 0 0 0 -2.9 -2.9 z"/><path d="M127.7 8.6 a6.4 6.4 0 0 1 6.4 6.4 h-1.3 a5.1 5.1 0 0 0 -5.1 -5.1 z"/></g>
<g fill="#e37933" transform="translate(193.7 18.9) translate(127.5 15) scale(0.86) translate(-127.5 -15)"><circle cx="128.6" cy="14.1" r="0.95"/><path d="M127.7 10.6 a4.4 4.4 0 0 1 4.4 4.4 h-1.5 a2.9 2.9 0 0 0 -2.9 -2.9 z"/><path d="M127.7 8.6 a6.4 6.4 0 0 1 6.4 6.4 h-1.3 a5.1 5.1 0 0 0 -5.1 -5.1 z"/></g>
<!-- html <> icons -->
<g id="ht1" stroke="#e37933" stroke-width="1.1" fill="none"><path d="M261.6 9.7 L259.3 12.3 L261.6 14.9 M263.4 9.7 L265.7 12.3 L263.4 14.9"/></g>
<g stroke="#e37933" stroke-width="1.1" fill="none" transform="translate(232.8 0)"><path d="M261.6 9.7 L259.3 12.3 L261.6 14.9 M263.4 9.7 L265.7 12.3 L263.4 14.9"/></g>
<!-- close x -->
<path d="M863.4 9.3 L869.4 15.3 M869.4 9.3 L863.4 15.3" stroke="#d8d8d8" stroke-width="1.1"/>
<!-- breadcrumb chevrons -->
<g stroke="#a0a0a0" stroke-width="0.9" fill="none"><path id="chev" d="M93.6 28.6 L97.2 31.8 L93.6 35"/><path d="M144.1 28.6 L147.7 31.8 L144.1 35"/><path d="M276.2 28.6 L279.8 31.8 L276.2 35"/><path d="M310.4 28.6 L314.0 31.8 L310.4 35"/></g>
</svg>

<!-- find widget -->
<div id="find"></div>
<div id="finp"></div>
<svg class="abs" style="left:0;top:0" width="1220" height="70" viewBox="0 0 1220 70" fill="none" stroke="#c5c5c5" stroke-width="0.9">
<path d="M870.8 47.8 L874.2 51 L870.8 54.2"/>
<!-- whole word ab -->
<path d="M1004.9 54.2 V55.5 H1015.9 V54.2" stroke="#b0b0b0" stroke-width="0.8"/>
<!-- regex .* -->
<rect x="1021" y="52.9" width="3.2" height="3.1" fill="#b8b8b8" stroke="none"/>
<path d="M1027.5 47.5 V53.3 M1025 49 L1030 51.8 M1030 49 L1025 51.8" stroke="#b8b8b8" stroke-width="0.9"/>
<!-- arrows -->
<path d="M1093.3 55.4 V47.4 M1089.5 51 L1093.3 47.2 L1097.1 51"/>
<path d="M1110.9 47.2 V55.2 M1107.1 51.6 L1110.9 55.4 L1114.7 51.6"/>
<path d="M1123 48.6 H1130.8 M1123 51.5 H1133 M1123 53.7 H1129.8"/>
<path d="M1141.5 48.3 L1147.7 54.5 M1147.7 48.3 L1141.5 54.5"/>
</svg>
<span class="u" style="left:55.30px;top:6.67px;font-size:9.2px;letter-spacing:0.109px;color:#969696">v15.conf</span>
<span class="u" style="left:138.60px;top:6.67px;font-size:9.2px;letter-spacing:0.233px;color:#969696">footer_templates.xml</span>
<span class="u" style="left:270.40px;top:6.67px;font-size:9.2px;letter-spacing:0.225px;color:#c5a97e">index.html</span>
<span class="u" style="left:318.40px;top:7.58px;font-size:8.2px;letter-spacing:0.107px;color:#9a8868">.../simplify_access_management/...</span>
<span class="u" style="left:453.10px;top:6.67px;font-size:9.2px;letter-spacing:0.000px;color:#c5a97e">M</span>
<span class="u" style="left:503.40px;top:6.67px;font-size:9.2px;letter-spacing:0.192px;color:#969696">index.html</span>
<span class="u" style="left:551.30px;top:7.58px;font-size:8.2px;letter-spacing:0.133px;color:#808080">.../advanced_web_domain_widget/...</span>
<span class="u" style="left:731.70px;top:6.67px;font-size:9.2px;letter-spacing:-0.086px;color:#ffffff">access_management_view.xml</span>
<span class="u" style="left:44.50px;top:26.37px;font-size:9.2px;letter-spacing:0.018px;color:#a9a9a9">custome15</span>
<span class="u" style="left:100.60px;top:26.37px;font-size:9.2px;letter-spacing:-0.137px;color:#a9a9a9">apps_dev</span>
<span class="u" style="left:150.20px;top:26.37px;font-size:9.2px;letter-spacing:-0.031px;color:#a9a9a9">simplify_access_management</span>
<span class="u" style="left:283.10px;top:26.37px;font-size:9.2px;letter-spacing:0.054px;color:#a9a9a9">views</span>
<span class="u" style="left:332.50px;top:26.37px;font-size:9.2px;letter-spacing:-0.094px;color:#a9a9a9">access_management_view.xml</span>
<span class="u" style="left:882.20px;top:45.67px;font-size:9.2px;letter-spacing:0.419px;color:#cccccc">tera</span>
<span class="u" style="left:990.70px;top:47.12px;font-size:7.6px;letter-spacing:-0.197px;color:#a0a0a0">Aa</span>
<span class="u" style="left:1037.60px;top:46.22px;font-size:8.6px;letter-spacing:-0.183px;color:#cccccc">1 of 1</span>
<span class="u" style="left:1006.5px;top:47.1px;font-size:7.4px;letter-spacing:0px;color:#b4b4b4">ab</span>

<!-- annotation -->
<svg class="abs" style="left:0;top:0;will-change:transform" width="1220" height="663" viewBox="0 0 1220 663">
  <rect x="358.3" y="364.1" width="149" height="25.6" fill="none" stroke="#ffffff" stroke-width="3.7" rx="1" ry="1"/>
  <path d="M427.2 391.2 Q466.8 439.3 554 476.8" fill="none" stroke="#ffffff" stroke-width="1.8"/>
  <path d="M560.6 480.5 L550.8 479.5 L553.3 473 Z" fill="#ffffff"/>
  <rect x="563.8" y="462.8" width="547.1" height="40.2" rx="4.5" ry="4.5" fill="#ffffff"/>
  <text transform="translate(569.7,490) scale(1.0255,1)" font-family="Liberation Sans, sans-serif" font-size="27.3" fill="#000000">Used our custom 'terabits_domain' widget.</text>
</svg>

</body>
</html>
